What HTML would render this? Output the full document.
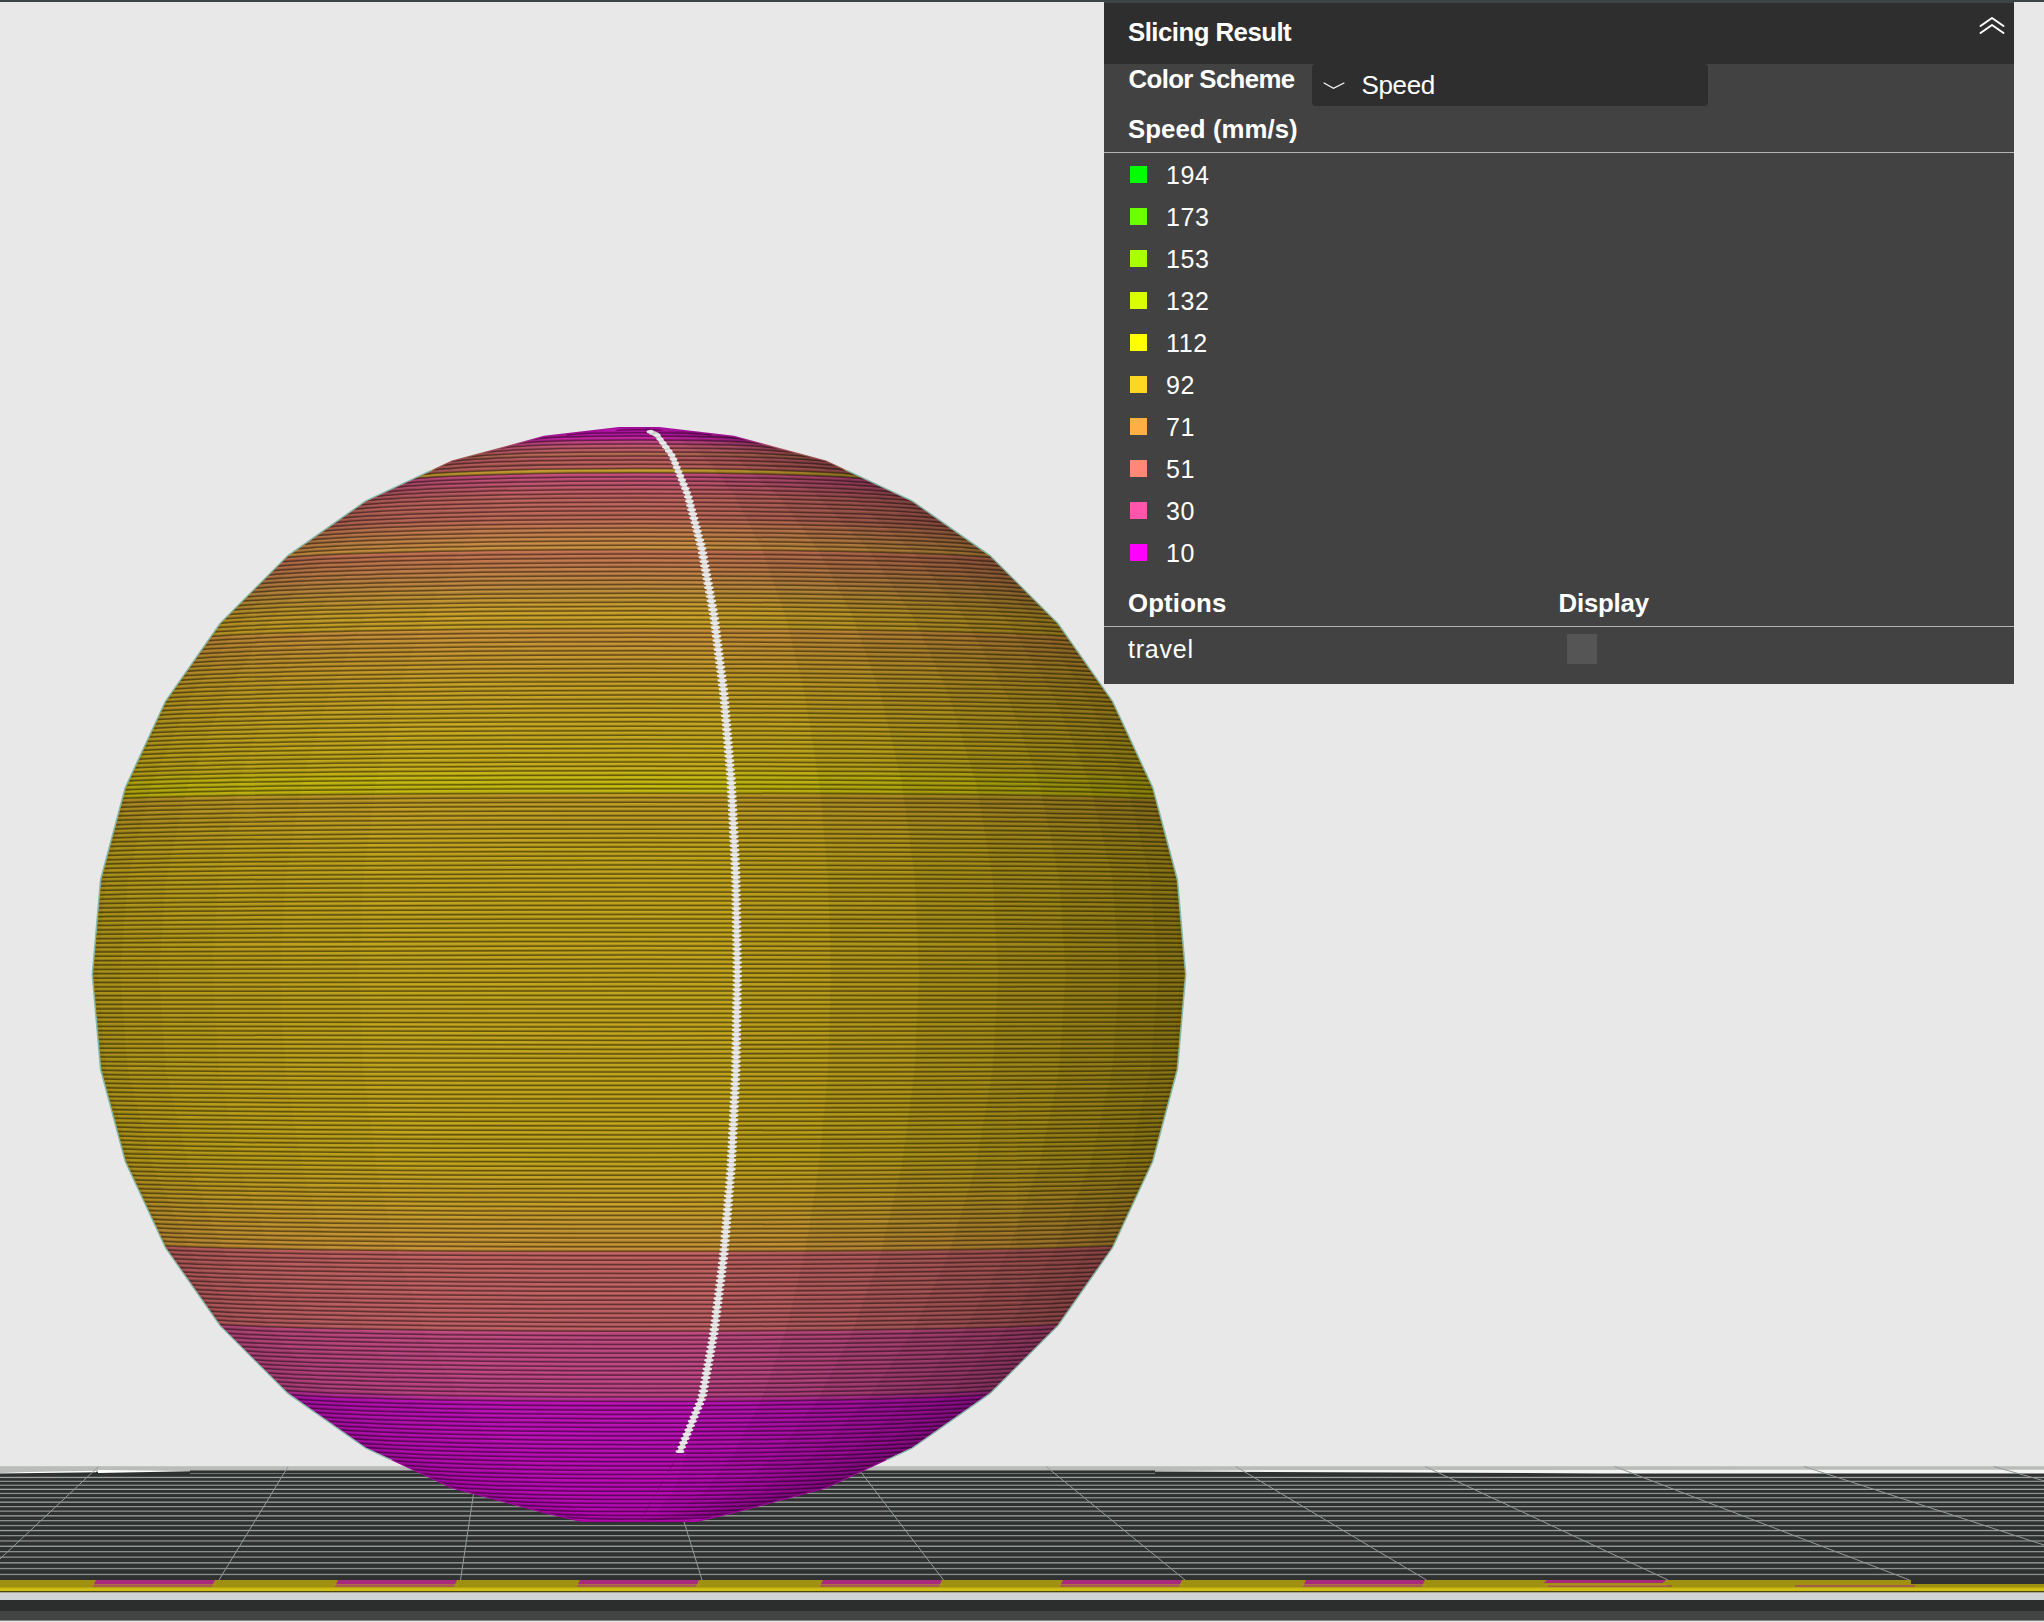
<!DOCTYPE html>
<html><head><meta charset="utf-8"><title>Slicing Result</title>
<style>
html,body{margin:0;padding:0}
body{width:2044px;height:1622px;overflow:hidden;background:#e8e8e8;position:relative;font-family:"Liberation Sans",sans-serif;color:#fff}
#topbar{position:absolute;left:0;top:0;width:2044px;height:2px;background:#3b4446}
#panel{position:absolute;left:1104px;top:0;width:910px;height:684px;background:#424242}
#hdr{position:absolute;left:0;top:0;width:910px;height:64px;background:#2e2e2e;border-top:3px solid #3b4446;box-sizing:border-box}
.b{font-weight:bold;position:absolute;white-space:nowrap}
.t{position:absolute;white-space:nowrap}
#dd{position:absolute;left:208px;top:64px;width:396px;height:42px;background:#2e2e2e;border-radius:4px}
.sep{position:absolute;left:0;width:910px;height:1px;background:#b4b4b4}
#legend{position:absolute;left:0;top:64px}
.row{position:absolute;left:26px;height:17px;white-space:nowrap}
.row i{position:absolute;left:0;top:0;width:17px;height:17px;display:block}
.row span{position:absolute;left:36px;top:-5.1px;font-size:25px;line-height:29px;letter-spacing:.6px}
#cb{position:absolute;left:463px;top:634px;width:30px;height:30px;background:#555}
</style></head><body>
<svg width="2044" height="1622" viewBox="0 0 2044 1622" style="position:absolute;left:0;top:0">
<defs><clipPath id="sc"><polygon points="1184.8,974.5 1176.5,879.7 1151.9,787.8 1111.7,701.6 1057.1,623.7 989.8,556.4 911.9,501.8 825.7,461.6 733.8,437.0 659.0,428.2 619.0,428.2 544.2,437.0 452.3,461.6 366.1,501.8 288.2,556.4 220.9,623.7 166.3,701.6 126.1,787.8 101.5,879.7 93.2,974.5 101.5,1069.3 126.1,1161.2 166.3,1247.4 220.9,1325.3 288.2,1392.6 366.1,1447.2 452.3,1487.4 544.2,1512.0 581.1,1520.8 696.9,1520.8 733.8,1512.0 825.7,1487.4 911.9,1447.2 989.8,1392.6 1057.1,1325.3 1111.7,1247.4 1151.9,1161.2 1176.5,1069.3"/></clipPath><linearGradient id="ug" gradientUnits="userSpaceOnUse" x1="0" y1="427.0" x2="0" y2="1522.0"><stop offset="0.0000" stop-color="#a00c98"/><stop offset="0.0100" stop-color="#a2188c"/><stop offset="0.0128" stop-color="#a43078"/><stop offset="0.0155" stop-color="#a4426a"/><stop offset="0.0192" stop-color="#a34d5b"/><stop offset="0.0228" stop-color="#a05053"/><stop offset="0.0237" stop-color="#9a5848"/><stop offset="0.0265" stop-color="#9a5848"/><stop offset="0.0274" stop-color="#9d4d53"/><stop offset="0.0329" stop-color="#9d504d"/><stop offset="0.0379" stop-color="#a05450"/><stop offset="0.0384" stop-color="#a48028"/><stop offset="0.0420" stop-color="#a48028"/><stop offset="0.0425" stop-color="#a4406a"/><stop offset="0.0493" stop-color="#a04560"/><stop offset="0.0639" stop-color="#a05350"/><stop offset="0.0840" stop-color="#9e584a"/><stop offset="0.0904" stop-color="#a36345"/><stop offset="0.1032" stop-color="#a5703c"/><stop offset="0.1132" stop-color="#ab7c34"/><stop offset="0.1146" stop-color="#a46045"/><stop offset="0.1260" stop-color="#a1663e"/><stop offset="0.1406" stop-color="#a07038"/><stop offset="0.1516" stop-color="#a17830"/><stop offset="0.1616" stop-color="#a48028"/><stop offset="0.1717" stop-color="#a98624"/><stop offset="0.1845" stop-color="#a68622"/><stop offset="0.1858" stop-color="#a87830"/><stop offset="0.2073" stop-color="#a47d28"/><stop offset="0.2347" stop-color="#a48420"/><stop offset="0.2685" stop-color="#a48a1c"/><stop offset="0.3132" stop-color="#a49016"/><stop offset="0.3187" stop-color="#a49810"/><stop offset="0.3333" stop-color="#a3990e"/><stop offset="0.3352" stop-color="#9e8020"/><stop offset="0.3863" stop-color="#a08819"/><stop offset="0.6694" stop-color="#a08818"/><stop offset="0.7059" stop-color="#a38320"/><stop offset="0.7543" stop-color="#a67a2e"/><stop offset="0.7553" stop-color="#a05250"/><stop offset="0.8256" stop-color="#a05053"/><stop offset="0.8265" stop-color="#a03e6b"/><stop offset="0.8868" stop-color="#9e3a70"/><stop offset="0.8904" stop-color="#9d1098"/><stop offset="1.0000" stop-color="#9a0896"/></linearGradient></defs>
<g id="plate">
<rect x="0" y="1466.2" width="2044" height="4.3" fill="#b9bcb9"/>
<rect x="0" y="1470.4" width="2044" height="110" fill="#2e3130"/>
<polygon points="0,1470 98,1470 98,1472 0,1472.6" fill="#b9bcb9"/>
<polygon points="0,1472.4 96,1470.8 96,1472.2 0,1473.6" fill="#fff"/>
<polygon points="98,1470 190,1470.4 190,1471.2 98,1473" fill="#fff"/>
<polygon points="1155,1470.6 1290,1470 2044,1469.8 2044,1473.6 1600,1473.4 1155,1471.4" fill="#f4f4f4"/>
<rect x="190" y="1473" width="965" height="1" fill="#6f7472"/>
<rect x="0" y="1476.8" width="2044" height="1.3" fill="#9ea3a0"/><rect x="0" y="1480.7" width="2044" height="1.3" fill="#8b908d"/><rect x="0" y="1484.6" width="2044" height="1.3" fill="#8b908d"/><rect x="0" y="1488.7" width="2044" height="1.3" fill="#9ea3a0"/><rect x="0" y="1492.8" width="2044" height="1.3" fill="#8b908d"/><rect x="0" y="1497.1" width="2044" height="1.3" fill="#8b908d"/><rect x="0" y="1501.5" width="2044" height="1.3" fill="#9ea3a0"/><rect x="0" y="1506.0" width="2044" height="1.3" fill="#8b908d"/><rect x="0" y="1510.5" width="2044" height="1.3" fill="#8b908d"/><rect x="0" y="1515.2" width="2044" height="1.3" fill="#9ea3a0"/><rect x="0" y="1520.0" width="2044" height="1.3" fill="#8b908d"/><rect x="0" y="1524.9" width="2044" height="1.3" fill="#8b908d"/><rect x="0" y="1529.9" width="2044" height="1.3" fill="#9ea3a0"/><rect x="0" y="1535.0" width="2044" height="1.3" fill="#8b908d"/><rect x="0" y="1540.3" width="2044" height="1.3" fill="#8b908d"/><rect x="0" y="1545.6" width="2044" height="1.3" fill="#9ea3a0"/><rect x="0" y="1551.0" width="2044" height="1.3" fill="#8b908d"/><rect x="0" y="1556.5" width="2044" height="1.3" fill="#8b908d"/><rect x="0" y="1562.2" width="2044" height="1.3" fill="#9ea3a0"/><rect x="0" y="1567.9" width="2044" height="1.3" fill="#8b908d"/><rect x="0" y="1573.8" width="2044" height="1.3" fill="#8b908d"/>
<g stroke="#959997" stroke-width="1"><line x1="-90.9" y1="1466.5" x2="-264.0" y2="1580"/><line x1="98.6" y1="1466.5" x2="-22.5" y2="1580"/><line x1="288.1" y1="1466.5" x2="219.0" y2="1580"/><line x1="477.6" y1="1466.5" x2="460.5" y2="1580"/><line x1="667.1" y1="1466.5" x2="702.0" y2="1580"/><line x1="856.6" y1="1466.5" x2="943.5" y2="1580"/><line x1="1046.1" y1="1466.5" x2="1185.0" y2="1580"/><line x1="1235.6" y1="1466.5" x2="1426.5" y2="1580"/><line x1="1425.1" y1="1466.5" x2="1668.0" y2="1580"/><line x1="1614.6" y1="1466.5" x2="1909.5" y2="1580"/><line x1="1804.1" y1="1466.5" x2="2151.0" y2="1580"/><line x1="1993.6" y1="1466.5" x2="2392.5" y2="1580"/><line x1="2183.1" y1="1466.5" x2="2634.0" y2="1580"/></g>
<rect x="0" y="1580" width="2044" height="8" fill="#a09010"/>
<polygon points="96,1580 215,1580 212,1586.5 93,1586.5" fill="#a82a7e"/><polygon points="338,1580 457,1580 454,1586.5 335,1586.5" fill="#a82a7e"/><polygon points="580,1580 699,1580 696,1586.5 577,1586.5" fill="#a82a7e"/><polygon points="823,1580 942,1580 939,1586.5 820,1586.5" fill="#a82a7e"/><polygon points="1063,1580 1182,1580 1179,1586.5 1060,1586.5" fill="#a82a7e"/><polygon points="1306,1580 1425,1580 1422,1586.5 1303,1586.5" fill="#a82a7e"/><polygon points="1547,1580 1666,1580 1663,1583.0 1544,1583.0" fill="#a82a7e"/><rect x="1548" y="1585.5" width="124" height="1" fill="#a82a7e"/><rect x="1911" y="1579.5" width="133" height="4.5" fill="#2e3130"/><rect x="1795" y="1585.5" width="120" height="1" fill="#a82a7e"/><rect x="92" y="1584.4" width="124" height="1" fill="#b09a20"/><rect x="334" y="1584.4" width="124" height="1" fill="#b09a20"/><rect x="576" y="1584.4" width="124" height="1" fill="#b09a20"/><rect x="819" y="1584.4" width="124" height="1" fill="#b09a20"/><rect x="1059" y="1584.4" width="124" height="1" fill="#b09a20"/><rect x="1302" y="1584.4" width="124" height="1" fill="#b09a20"/><rect x="1543" y="1584.4" width="124" height="1" fill="#b09a20"/>
<rect x="0" y="1587.6" width="2044" height="3.4" fill="#cfbf15"/>
<rect x="0" y="1591" width="2044" height="1.6" fill="#4a4512"/>
<rect x="0" y="1592.6" width="2044" height="7.6" fill="#d0d3d3"/>
<rect x="0" y="1600" width="2044" height="11" fill="#2c2e2d"/>
<rect x="0" y="1611" width="2044" height="9.6" fill="#424443"/>
</g>
<clipPath id="tc2"><rect x="0" y="0" width="2044" height="470"/><rect x="0" y="1460" width="2044" height="100"/></clipPath><clipPath id="tc"><rect x="0" y="470" width="2044" height="990"/></clipPath><polygon points="1186.0,974.5 1177.7,879.5 1153.0,787.4 1112.7,701.0 1058.0,622.9 990.6,555.5 912.5,500.8 826.1,460.5 734.0,435.8 659.0,427.0 619.0,427.0 544.0,435.8 451.9,460.5 365.5,500.8 287.4,555.5 220.0,622.9 165.3,701.0 125.0,787.4 100.3,879.5 92.0,974.5 100.3,1069.5 125.0,1161.6 165.3,1248.0 220.0,1326.1 287.4,1393.5 365.5,1448.2 451.9,1488.5 544.0,1513.2 581.0,1522.0 697.0,1522.0 734.0,1513.2 826.1,1488.5 912.5,1448.2 990.6,1393.5 1058.0,1326.1 1112.7,1248.0 1153.0,1161.6 1177.7,1069.5" fill="#7fb5a5" stroke="#7fb5a5" stroke-width="1" stroke-opacity=".8" clip-path="url(#tc)"/><polygon points="1186.0,974.5 1177.7,879.5 1153.0,787.4 1112.7,701.0 1058.0,622.9 990.6,555.5 912.5,500.8 826.1,460.5 734.0,435.8 659.0,427.0 619.0,427.0 544.0,435.8 451.9,460.5 365.5,500.8 287.4,555.5 220.0,622.9 165.3,701.0 125.0,787.4 100.3,879.5 92.0,974.5 100.3,1069.5 125.0,1161.6 165.3,1248.0 220.0,1326.1 287.4,1393.5 365.5,1448.2 451.9,1488.5 544.0,1513.2 581.0,1522.0 697.0,1522.0 734.0,1513.2 826.1,1488.5 912.5,1448.2 990.6,1393.5 1058.0,1326.1 1112.7,1248.0 1153.0,1161.6 1177.7,1069.5" fill="url(#ug)" clip-path="url(#tc2)"/>
<polygon points="1184.8,974.5 1176.5,879.7 1151.9,787.8 1111.7,701.6 1057.1,623.7 989.8,556.4 911.9,501.8 825.7,461.6 733.8,437.0 659.0,428.2 619.0,428.2 544.2,437.0 452.3,461.6 366.1,501.8 288.2,556.4 220.9,623.7 166.3,701.6 126.1,787.8 101.5,879.7 93.2,974.5 101.5,1069.3 126.1,1161.2 166.3,1247.4 220.9,1325.3 288.2,1392.6 366.1,1447.2 452.3,1487.4 544.2,1512.0 581.1,1520.8 696.9,1520.8 733.8,1512.0 825.7,1487.4 911.9,1447.2 989.8,1392.6 1057.1,1325.3 1111.7,1247.4 1151.9,1161.2 1176.5,1069.3" fill="url(#ug)"/>
<g clip-path="url(#sc)">
<g fill="none" stroke-width="4.98">
<path d="M616.0 429.2A21.2 0.85 0 0 1 662.0 429.2" stroke="#c311b7"/><path d="M566.6 433.6A73.5 2.94 0 0 1 711.4 433.6" stroke="#c415b3"/><path d="M533.0 437.9A109.1 4.33 0 0 1 745.0 437.9" stroke="#c519af"/><path d="M516.7 442.3A126.5 4.98 0 0 1 761.3 442.3" stroke="#c727a2"/><path d="M500.3 446.7A143.8 5.62 0 0 1 777.7 446.7" stroke="#c84887"/><path d="M484.0 451.1A161.1 6.25 0 0 1 794.0 451.1" stroke="#c75a74"/><path d="M467.6 455.5A178.5 6.86 0 0 1 810.4 455.5" stroke="#c46068"/><path d="M451.3 459.9A195.8 7.47 0 0 1 826.7 459.9" stroke="#bb6b58"/><path d="M440.9 464.2A206.8 7.82 0 0 1 837.1 464.2" stroke="#bf5f63"/><path d="M431.5 468.6A216.8 8.13 0 0 1 846.5 468.6" stroke="#bf625e"/><path d="M422.1 473.0A226.7 8.44 0 0 1 855.9 473.0" stroke="#c26561"/><path d="M412.7 477.4A236.7 8.73 0 0 1 865.3 477.4" stroke="#c89c31"/><path d="M403.3 481.8A246.6 9.03 0 0 1 874.7 481.8" stroke="#c6507d"/><path d="M393.9 486.1A256.6 9.31 0 0 1 884.1 486.1" stroke="#c45377"/><path d="M384.5 490.5A266.6 9.59 0 0 1 893.5 490.5" stroke="#c35771"/><path d="M375.1 494.9A276.5 9.86 0 0 1 902.9 494.9" stroke="#c35c6c"/><path d="M365.7 499.3A286.5 10.13 0 0 1 912.3 499.3" stroke="#c36067"/><path d="M358.4 503.6A294.2 10.31 0 0 1 919.6 503.6" stroke="#c36562"/><path d="M352.2 508.0A300.9 10.45 0 0 1 925.8 508.0" stroke="#c36660"/><path d="M345.9 512.4A307.5 10.59 0 0 1 932.1 512.4" stroke="#c2685f"/><path d="M339.6 516.8A314.1 10.72 0 0 1 938.4 516.8" stroke="#c2695d"/><path d="M333.4 521.2A320.8 10.85 0 0 1 944.6 521.2" stroke="#c16a5b"/><path d="M327.1 525.6A327.4 10.97 0 0 1 950.9 525.6" stroke="#c16b5a"/><path d="M320.9 529.9A334.0 11.09 0 0 1 957.1 529.9" stroke="#c47257"/><path d="M314.6 534.3A340.7 11.20 0 0 1 963.4 534.3" stroke="#c77a53"/><path d="M308.4 538.7A347.3 11.31 0 0 1 969.6 538.7" stroke="#c87f50"/><path d="M302.1 543.1A353.9 11.42 0 0 1 975.9 543.1" stroke="#c8834d"/><path d="M295.9 547.5A360.6 11.52 0 0 1 982.1 547.5" stroke="#c98849"/><path d="M289.6 551.8A367.2 11.62 0 0 1 988.4 551.8" stroke="#cc8e46"/><path d="M283.7 556.2A373.5 11.70 0 0 1 994.3 556.2" stroke="#cf9442"/><path d="M279.3 560.6A378.1 11.73 0 0 1 998.7 560.6" stroke="#c87554"/><path d="M274.9 565.0A382.8 11.76 0 0 1 1003.1 565.0" stroke="#c67851"/><path d="M270.5 569.4A387.4 11.78 0 0 1 1007.5 569.4" stroke="#c57b4e"/><path d="M266.1 573.7A392.1 11.80 0 0 1 1011.9 573.7" stroke="#c47d4c"/><path d="M261.8 578.1A396.7 11.82 0 0 1 1016.2 578.1" stroke="#c4814a"/><path d="M257.4 582.5A401.3 11.83 0 0 1 1020.6 582.5" stroke="#c38447"/><path d="M253.0 586.9A406.0 11.84 0 0 1 1025.0 586.9" stroke="#c38745"/><path d="M248.6 591.2A410.6 11.85 0 0 1 1029.4 591.2" stroke="#c38a42"/><path d="M244.2 595.6A415.3 11.86 0 0 1 1033.8 595.6" stroke="#c48e3f"/><path d="M239.9 600.0A419.9 11.86 0 0 1 1038.1 600.0" stroke="#c4923b"/><path d="M235.5 604.4A424.6 11.86 0 0 1 1042.5 604.4" stroke="#c59537"/><path d="M231.1 608.8A429.2 11.86 0 0 1 1046.9 608.8" stroke="#c79934"/><path d="M226.7 613.2A433.8 11.85 0 0 1 1051.3 613.2" stroke="#c99d30"/><path d="M222.3 617.5A438.5 11.84 0 0 1 1055.7 617.5" stroke="#cba02e"/><path d="M218.0 621.9A443.1 11.83 0 0 1 1060.0 621.9" stroke="#cda32c"/><path d="M214.6 626.3A446.7 11.79 0 0 1 1063.4 626.3" stroke="#cda42b"/><path d="M211.5 630.7A449.9 11.73 0 0 1 1066.5 630.7" stroke="#cca42a"/><path d="M208.5 635.1A453.2 11.68 0 0 1 1069.5 635.1" stroke="#cba429"/><path d="M205.4 639.4A456.4 11.62 0 0 1 1072.6 639.4" stroke="#cd933a"/><path d="M202.3 643.8A459.7 11.56 0 0 1 1075.7 643.8" stroke="#cc9438"/><path d="M199.3 648.2A462.9 11.50 0 0 1 1078.7 648.2" stroke="#cb9536"/><path d="M196.2 652.6A466.2 11.44 0 0 1 1081.8 652.6" stroke="#ca9635"/><path d="M193.1 657.0A469.4 11.37 0 0 1 1084.9 657.0" stroke="#c99733"/><path d="M190.1 661.3A472.7 11.30 0 0 1 1087.9 661.3" stroke="#c89831"/><path d="M187.0 665.7A475.9 11.23 0 0 1 1091.0 665.7" stroke="#c8992f"/><path d="M183.9 670.1A479.2 11.16 0 0 1 1094.1 670.1" stroke="#c89b2e"/><path d="M180.9 674.5A482.4 11.09 0 0 1 1097.1 674.5" stroke="#c89c2d"/><path d="M177.8 678.9A485.7 11.01 0 0 1 1100.2 678.9" stroke="#c89d2b"/><path d="M174.7 683.2A488.9 10.94 0 0 1 1103.3 683.2" stroke="#c89f2a"/><path d="M171.7 687.6A492.2 10.86 0 0 1 1106.3 687.6" stroke="#c8a028"/><path d="M168.6 692.0A495.5 10.78 0 0 1 1109.4 692.0" stroke="#c8a127"/><path d="M165.5 696.4A498.7 10.69 0 0 1 1112.5 696.4" stroke="#c8a226"/><path d="M162.5 700.8A502.0 10.61 0 0 1 1115.5 700.8" stroke="#c8a326"/><path d="M160.4 705.1A504.2 10.50 0 0 1 1117.6 705.1" stroke="#c8a325"/><path d="M158.3 709.5A506.3 10.39 0 0 1 1119.7 709.5" stroke="#c8a425"/><path d="M156.3 713.9A508.5 10.27 0 0 1 1121.7 713.9" stroke="#c8a524"/><path d="M154.2 718.3A510.7 10.16 0 0 1 1123.8 718.3" stroke="#c8a623"/><path d="M152.2 722.7A512.8 10.04 0 0 1 1125.8 722.7" stroke="#c8a723"/><path d="M150.1 727.0A515.0 9.93 0 0 1 1127.9 727.0" stroke="#c8a822"/><path d="M148.1 731.4A517.2 9.81 0 0 1 1129.9 731.4" stroke="#c8a822"/><path d="M146.1 735.8A519.3 9.69 0 0 1 1131.9 735.8" stroke="#c8a921"/><path d="M144.0 740.2A521.5 9.57 0 0 1 1134.0 740.2" stroke="#c8aa20"/><path d="M142.0 744.6A523.7 9.45 0 0 1 1136.0 744.6" stroke="#c8aa20"/><path d="M139.9 748.9A525.8 9.32 0 0 1 1138.1 748.9" stroke="#c8ab1f"/><path d="M137.9 753.3A528.0 9.20 0 0 1 1140.1 753.3" stroke="#c8ac1e"/><path d="M135.8 757.7A530.2 9.07 0 0 1 1142.2 757.7" stroke="#c8ad1e"/><path d="M133.8 762.1A532.3 8.94 0 0 1 1144.2 762.1" stroke="#c8ad1d"/><path d="M131.8 766.5A534.5 8.81 0 0 1 1146.2 766.5" stroke="#c8ae1d"/><path d="M129.7 770.8A536.7 8.68 0 0 1 1148.3 770.8" stroke="#c8af1c"/><path d="M127.7 775.2A538.8 8.55 0 0 1 1150.3 775.2" stroke="#c8af1b"/><path d="M125.6 779.6A541.0 8.42 0 0 1 1152.4 779.6" stroke="#c8b616"/><path d="M123.6 784.0A543.1 8.29 0 0 1 1154.4 784.0" stroke="#c8b913"/><path d="M121.7 788.4A545.1 8.15 0 0 1 1156.3 788.4" stroke="#c7ba13"/><path d="M120.6 792.7A546.4 8.00 0 0 1 1157.4 792.7" stroke="#c7ba12"/><path d="M119.4 797.1A547.6 7.85 0 0 1 1158.6 797.1" stroke="#c7ba12"/><path d="M118.2 801.5A548.9 7.69 0 0 1 1159.8 801.5" stroke="#c19c27"/><path d="M117.0 805.9A550.1 7.54 0 0 1 1161.0 805.9" stroke="#c19d26"/><path d="M115.9 810.2A551.3 7.39 0 0 1 1162.1 810.2" stroke="#c19e25"/><path d="M114.7 814.6A552.6 7.23 0 0 1 1163.3 814.6" stroke="#c29f25"/><path d="M113.5 819.0A553.8 7.08 0 0 1 1164.5 819.0" stroke="#c2a024"/><path d="M112.3 823.4A555.1 6.92 0 0 1 1165.7 823.4" stroke="#c2a023"/><path d="M111.2 827.8A556.3 6.77 0 0 1 1166.8 827.8" stroke="#c2a122"/><path d="M110.0 832.2A557.6 6.61 0 0 1 1168.0 832.2" stroke="#c2a222"/><path d="M108.8 836.5A558.8 6.45 0 0 1 1169.2 836.5" stroke="#c2a321"/><path d="M107.7 840.9A560.0 6.29 0 0 1 1170.3 840.9" stroke="#c3a320"/><path d="M106.5 845.3A561.3 6.13 0 0 1 1171.5 845.3" stroke="#c3a420"/><path d="M105.3 849.7A562.5 5.97 0 0 1 1172.7 849.7" stroke="#c3a51f"/><path d="M104.1 854.1A563.8 5.81 0 0 1 1173.9 854.1" stroke="#c3a61e"/><path d="M103.0 858.4A565.0 5.65 0 0 1 1175.0 858.4" stroke="#c3a61e"/><path d="M101.8 862.8A566.3 5.49 0 0 1 1176.2 862.8" stroke="#c3a61e"/><path d="M100.6 867.2A567.5 5.32 0 0 1 1177.4 867.2" stroke="#c3a61e"/><path d="M99.4 871.6A568.8 5.16 0 0 1 1178.6 871.6" stroke="#c3a61e"/><path d="M98.3 876.0A570.0 4.99 0 0 1 1179.7 876.0" stroke="#c3a61e"/><path d="M97.2 880.3A571.1 4.83 0 0 1 1180.8 880.3" stroke="#c3a61e"/><path d="M96.9 884.7A571.5 4.65 0 0 1 1181.1 884.7" stroke="#c3a61e"/><path d="M96.5 889.1A571.9 4.48 0 0 1 1181.5 889.1" stroke="#c3a61e"/><path d="M96.1 893.5A572.3 4.31 0 0 1 1181.9 893.5" stroke="#c3a61e"/><path d="M95.7 897.9A572.7 4.13 0 0 1 1182.3 897.9" stroke="#c3a61e"/><path d="M95.3 902.2A573.1 3.96 0 0 1 1182.7 902.2" stroke="#c3a61e"/><path d="M94.9 906.6A573.5 3.78 0 0 1 1183.1 906.6" stroke="#c3a61e"/><path d="M94.6 911.0A573.9 3.61 0 0 1 1183.4 911.0" stroke="#c3a61e"/><path d="M94.2 915.4A574.3 3.43 0 0 1 1183.8 915.4" stroke="#c3a61e"/><path d="M93.8 919.8A574.7 3.26 0 0 1 1184.2 919.8" stroke="#c3a61e"/><path d="M93.4 924.1A575.1 3.08 0 0 1 1184.6 924.1" stroke="#c3a61e"/><path d="M93.0 928.5A575.6 2.91 0 0 1 1185.0 928.5" stroke="#c3a61e"/><path d="M92.6 932.9A576.0 2.73 0 0 1 1185.4 932.9" stroke="#c3a61e"/><path d="M92.3 937.3A576.4 2.55 0 0 1 1185.7 937.3" stroke="#c3a61e"/><path d="M91.9 941.7A576.8 2.38 0 0 1 1186.1 941.7" stroke="#c3a61e"/><path d="M91.5 946.0A577.2 2.20 0 0 1 1186.5 946.0" stroke="#c3a61e"/><path d="M91.1 950.4A577.6 2.02 0 0 1 1186.9 950.4" stroke="#c3a61e"/><path d="M90.7 954.8A578.0 1.85 0 0 1 1187.3 954.8" stroke="#c3a61e"/><path d="M90.3 959.2A578.4 1.67 0 0 1 1187.7 959.2" stroke="#c3a61e"/><path d="M90.0 963.6A578.8 1.49 0 0 1 1188.0 963.6" stroke="#c3a61e"/><path d="M89.6 967.9A579.2 1.31 0 0 1 1188.4 967.9" stroke="#c3a61e"/><path d="M89.2 972.3A579.6 1.13 0 0 1 1188.8 972.3" stroke="#c3a61e"/><path d="M89.2 976.7A579.6 0.95 0 0 1 1188.8 976.7" stroke="#c3a61e"/><path d="M89.6 981.1A579.2 0.77 0 0 1 1188.4 981.1" stroke="#c3a61e"/><path d="M90.0 985.5A578.8 0.59 0 0 1 1188.0 985.5" stroke="#c3a61e"/><path d="M90.3 989.8A578.4 0.42 0 0 1 1187.7 989.8" stroke="#c3a61e"/><path d="M90.7 994.2A578.0 0.24 0 0 1 1187.3 994.2" stroke="#c3a61e"/><path d="M91.1 998.6A577.6 0.06 0 0 1 1186.9 998.6" stroke="#c3a61e"/><path d="M91.5 1003.0A577.2 0.12 0 0 0 1186.5 1003.0" stroke="#c3a61e"/><path d="M91.9 1007.4A576.8 0.30 0 0 0 1186.1 1007.4" stroke="#c3a61e"/><path d="M92.3 1011.7A576.4 0.48 0 0 0 1185.7 1011.7" stroke="#c3a61e"/><path d="M92.6 1016.1A576.0 0.66 0 0 0 1185.4 1016.1" stroke="#c3a61e"/><path d="M93.0 1020.5A575.6 0.83 0 0 0 1185.0 1020.5" stroke="#c3a61e"/><path d="M93.4 1024.9A575.1 1.01 0 0 0 1184.6 1024.9" stroke="#c3a61e"/><path d="M93.8 1029.2A574.7 1.19 0 0 0 1184.2 1029.2" stroke="#c3a61e"/><path d="M94.2 1033.6A574.3 1.36 0 0 0 1183.8 1033.6" stroke="#c3a61e"/><path d="M94.6 1038.0A573.9 1.54 0 0 0 1183.4 1038.0" stroke="#c3a61e"/><path d="M94.9 1042.4A573.5 1.72 0 0 0 1183.1 1042.4" stroke="#c3a61e"/><path d="M95.3 1046.8A573.1 1.89 0 0 0 1182.7 1046.8" stroke="#c3a61e"/><path d="M95.7 1051.2A572.7 2.07 0 0 0 1182.3 1051.2" stroke="#c3a61e"/><path d="M96.1 1055.5A572.3 2.24 0 0 0 1181.9 1055.5" stroke="#c3a61e"/><path d="M96.5 1059.9A571.9 2.42 0 0 0 1181.5 1059.9" stroke="#c3a61e"/><path d="M96.9 1064.3A571.5 2.59 0 0 0 1181.1 1064.3" stroke="#c3a61e"/><path d="M97.2 1068.7A571.1 2.77 0 0 0 1180.8 1068.7" stroke="#c3a61e"/><path d="M98.3 1073.1A570.0 2.94 0 0 0 1179.7 1073.1" stroke="#c3a61e"/><path d="M99.4 1077.4A568.8 3.11 0 0 0 1178.6 1077.4" stroke="#c3a61e"/><path d="M100.6 1081.8A567.5 3.28 0 0 0 1177.4 1081.8" stroke="#c3a61d"/><path d="M101.8 1086.2A566.3 3.45 0 0 0 1176.2 1086.2" stroke="#c3a61d"/><path d="M103.0 1090.6A565.0 3.61 0 0 0 1175.0 1090.6" stroke="#c3a61d"/><path d="M104.1 1095.0A563.8 3.78 0 0 0 1173.9 1095.0" stroke="#c3a61d"/><path d="M105.3 1099.3A562.5 3.95 0 0 0 1172.7 1099.3" stroke="#c3a61d"/><path d="M106.5 1103.7A561.3 4.11 0 0 0 1171.5 1103.7" stroke="#c3a61d"/><path d="M107.7 1108.1A560.0 4.27 0 0 0 1170.3 1108.1" stroke="#c3a61d"/><path d="M108.8 1112.5A558.8 4.44 0 0 0 1169.2 1112.5" stroke="#c3a61d"/><path d="M110.0 1116.8A557.6 4.60 0 0 0 1168.0 1116.8" stroke="#c3a61d"/><path d="M111.2 1121.2A556.3 4.76 0 0 0 1166.8 1121.2" stroke="#c3a61d"/><path d="M112.3 1125.6A555.1 4.92 0 0 0 1165.7 1125.6" stroke="#c3a61d"/><path d="M113.5 1130.0A553.8 5.08 0 0 0 1164.5 1130.0" stroke="#c3a61d"/><path d="M114.7 1134.4A552.6 5.24 0 0 0 1163.3 1134.4" stroke="#c3a61d"/><path d="M115.9 1138.8A551.3 5.40 0 0 0 1162.1 1138.8" stroke="#c3a61d"/><path d="M117.0 1143.1A550.1 5.56 0 0 0 1161.0 1143.1" stroke="#c3a61d"/><path d="M118.2 1147.5A548.9 5.72 0 0 0 1159.8 1147.5" stroke="#c3a61d"/><path d="M119.4 1151.9A547.6 5.87 0 0 0 1158.6 1151.9" stroke="#c3a61d"/><path d="M120.6 1156.3A546.4 6.03 0 0 0 1157.4 1156.3" stroke="#c3a61d"/><path d="M121.7 1160.7A545.1 6.18 0 0 0 1156.3 1160.7" stroke="#c3a51e"/><path d="M123.6 1165.0A543.1 6.33 0 0 0 1154.4 1165.0" stroke="#c4a420"/><path d="M125.6 1169.4A541.0 6.47 0 0 0 1152.4 1169.4" stroke="#c4a421"/><path d="M127.7 1173.8A538.8 6.61 0 0 0 1150.3 1173.8" stroke="#c5a322"/><path d="M129.7 1178.2A536.7 6.75 0 0 0 1148.3 1178.2" stroke="#c5a223"/><path d="M131.8 1182.6A534.5 6.89 0 0 0 1146.2 1182.6" stroke="#c6a224"/><path d="M133.8 1186.9A532.3 7.03 0 0 0 1144.2 1186.9" stroke="#c6a125"/><path d="M135.8 1191.3A530.2 7.16 0 0 0 1142.2 1191.3" stroke="#c7a026"/><path d="M137.9 1195.7A528.0 7.30 0 0 0 1140.1 1195.7" stroke="#c7a027"/><path d="M139.9 1200.1A525.8 7.43 0 0 0 1138.1 1200.1" stroke="#c79f29"/><path d="M142.0 1204.5A523.7 7.56 0 0 0 1136.0 1204.5" stroke="#c89e2a"/><path d="M144.0 1208.8A521.5 7.69 0 0 0 1134.0 1208.8" stroke="#c89d2c"/><path d="M146.1 1213.2A519.3 7.82 0 0 0 1131.9 1213.2" stroke="#c89c2d"/><path d="M148.1 1217.6A517.2 7.95 0 0 0 1129.9 1217.6" stroke="#c99b2f"/><path d="M150.1 1222.0A515.0 8.07 0 0 0 1127.9 1222.0" stroke="#c99a30"/><path d="M152.2 1226.3A512.8 8.20 0 0 0 1125.8 1226.3" stroke="#c99932"/><path d="M154.2 1230.7A510.7 8.32 0 0 0 1123.8 1230.7" stroke="#ca9833"/><path d="M156.3 1235.1A508.5 8.44 0 0 0 1121.7 1235.1" stroke="#ca9734"/><path d="M158.3 1239.5A506.3 8.56 0 0 0 1119.7 1239.5" stroke="#ca9636"/><path d="M160.4 1243.9A504.2 8.68 0 0 0 1117.6 1243.9" stroke="#cb9537"/><path d="M162.5 1248.2A502.0 8.80 0 0 0 1115.5 1248.2" stroke="#c36362"/><path d="M165.5 1252.6A498.7 8.90 0 0 0 1112.5 1252.6" stroke="#c36362"/><path d="M168.6 1257.0A495.5 8.99 0 0 0 1109.4 1257.0" stroke="#c36362"/><path d="M171.7 1261.4A492.2 9.08 0 0 0 1106.3 1261.4" stroke="#c36362"/><path d="M174.7 1265.8A488.9 9.18 0 0 0 1103.3 1265.8" stroke="#c36362"/><path d="M177.8 1270.2A485.7 9.27 0 0 0 1100.2 1270.2" stroke="#c36363"/><path d="M180.9 1274.5A482.4 9.35 0 0 0 1097.1 1274.5" stroke="#c36363"/><path d="M183.9 1278.9A479.2 9.44 0 0 0 1094.1 1278.9" stroke="#c36363"/><path d="M187.0 1283.3A475.9 9.52 0 0 0 1091.0 1283.3" stroke="#c36363"/><path d="M190.1 1287.7A472.7 9.60 0 0 0 1087.9 1287.7" stroke="#c36264"/><path d="M193.1 1292.1A469.4 9.68 0 0 0 1084.9 1292.1" stroke="#c36264"/><path d="M196.2 1296.4A466.2 9.76 0 0 0 1081.8 1296.4" stroke="#c36264"/><path d="M199.3 1300.8A462.9 9.83 0 0 0 1078.7 1300.8" stroke="#c36264"/><path d="M202.3 1305.2A459.7 9.91 0 0 0 1075.7 1305.2" stroke="#c36264"/><path d="M205.4 1309.6A456.4 9.98 0 0 0 1072.6 1309.6" stroke="#c36265"/><path d="M208.5 1314.0A453.2 10.05 0 0 0 1069.5 1314.0" stroke="#c36265"/><path d="M211.5 1318.3A449.9 10.11 0 0 0 1066.5 1318.3" stroke="#c36265"/><path d="M214.6 1322.7A446.7 10.18 0 0 0 1063.4 1322.7" stroke="#c36265"/><path d="M218.0 1327.1A443.1 10.23 0 0 0 1060.0 1327.1" stroke="#c34c83"/><path d="M222.3 1331.5A438.5 10.26 0 0 0 1055.7 1331.5" stroke="#c34b83"/><path d="M226.7 1335.8A433.8 10.29 0 0 0 1051.3 1335.8" stroke="#c34b84"/><path d="M231.1 1340.2A429.2 10.31 0 0 0 1046.9 1340.2" stroke="#c34b84"/><path d="M235.5 1344.6A424.6 10.33 0 0 0 1042.5 1344.6" stroke="#c24a84"/><path d="M239.9 1349.0A419.9 10.35 0 0 0 1038.1 1349.0" stroke="#c24a85"/><path d="M244.2 1353.4A415.3 10.36 0 0 0 1033.8 1353.4" stroke="#c24a85"/><path d="M248.6 1357.8A410.6 10.37 0 0 0 1029.4 1357.8" stroke="#c24986"/><path d="M253.0 1362.1A406.0 10.38 0 0 0 1025.0 1362.1" stroke="#c24986"/><path d="M257.4 1366.5A401.3 10.39 0 0 0 1020.6 1366.5" stroke="#c24886"/><path d="M261.8 1370.9A396.7 10.39 0 0 0 1016.2 1370.9" stroke="#c24887"/><path d="M266.1 1375.3A392.1 10.39 0 0 0 1011.9 1375.3" stroke="#c24887"/><path d="M270.5 1379.7A387.4 10.39 0 0 0 1007.5 1379.7" stroke="#c14787"/><path d="M274.9 1384.0A382.8 10.38 0 0 0 1003.1 1384.0" stroke="#c14788"/><path d="M279.3 1388.4A378.1 10.37 0 0 0 998.7 1388.4" stroke="#c14688"/><path d="M283.7 1392.8A373.5 10.36 0 0 0 994.3 1392.8" stroke="#c0319d"/><path d="M289.6 1397.2A367.2 10.30 0 0 0 988.4 1397.2" stroke="#bf13b9"/><path d="M295.9 1401.6A360.6 10.22 0 0 0 982.1 1401.6" stroke="#bf13b9"/><path d="M302.1 1405.9A353.9 10.14 0 0 0 975.9 1405.9" stroke="#bf13b9"/><path d="M308.4 1410.3A347.3 10.06 0 0 0 969.6 1410.3" stroke="#bf12b9"/><path d="M314.6 1414.7A340.7 9.98 0 0 0 963.4 1414.7" stroke="#be12b9"/><path d="M320.9 1419.1A334.0 9.88 0 0 0 957.1 1419.1" stroke="#be12b9"/><path d="M327.1 1423.5A327.4 9.79 0 0 0 950.9 1423.5" stroke="#be11b9"/><path d="M333.4 1427.8A320.8 9.69 0 0 0 944.6 1427.8" stroke="#be11b9"/><path d="M339.6 1432.2A314.1 9.59 0 0 0 938.4 1432.2" stroke="#be11b9"/><path d="M345.9 1436.6A307.5 9.48 0 0 0 932.1 1436.6" stroke="#be10b9"/><path d="M352.2 1441.0A300.9 9.37 0 0 0 925.8 1441.0" stroke="#be10b9"/><path d="M358.4 1445.3A294.2 9.25 0 0 0 919.6 1445.3" stroke="#bd0fb8"/><path d="M365.7 1449.7A286.5 9.10 0 0 0 912.3 1449.7" stroke="#bd0fb8"/><path d="M375.1 1454.1A276.5 8.87 0 0 0 902.9 1454.1" stroke="#bd0fb8"/><path d="M384.5 1458.5A266.6 8.63 0 0 0 893.5 1458.5" stroke="#bd0eb8"/><path d="M393.9 1462.9A256.6 8.39 0 0 0 884.1 1462.9" stroke="#bd0eb8"/><path d="M403.3 1467.2A246.6 8.14 0 0 0 874.7 1467.2" stroke="#bd0eb8"/><path d="M412.7 1471.6A236.7 7.88 0 0 0 865.3 1471.6" stroke="#bd0db8"/><path d="M422.1 1476.0A226.7 7.62 0 0 0 855.9 1476.0" stroke="#bd0db8"/><path d="M431.5 1480.4A216.8 7.35 0 0 0 846.5 1480.4" stroke="#bc0db8"/><path d="M440.9 1484.8A206.8 7.08 0 0 0 837.1 1484.8" stroke="#bc0cb8"/><path d="M451.3 1489.2A195.8 6.76 0 0 0 826.7 1489.2" stroke="#bc0cb8"/><path d="M467.6 1493.5A178.5 6.22 0 0 0 810.4 1493.5" stroke="#bc0cb8"/><path d="M484.0 1497.9A161.1 5.67 0 0 0 794.0 1497.9" stroke="#bc0bb8"/><path d="M500.3 1502.3A143.8 5.10 0 0 0 777.7 1502.3" stroke="#bc0bb8"/><path d="M516.7 1506.7A126.5 4.53 0 0 0 761.3 1506.7" stroke="#bc0bb7"/><path d="M533.0 1511.0A109.1 3.94 0 0 0 745.0 1511.0" stroke="#bb0ab7"/><path d="M566.6 1515.4A73.5 2.68 0 0 0 711.4 1515.4" stroke="#bb0ab7"/><path d="M573.0 1519.8A66.8 2.45 0 0 0 705.0 1519.8" stroke="#bb0ab7"/>
</g>
<defs><g id="dk"><path d="M616.0 429.2A21.2 0.85 0 0 1 662.0 429.2"/><path d="M566.6 433.6A73.5 2.94 0 0 1 711.4 433.6"/><path d="M533.0 437.9A109.1 4.33 0 0 1 745.0 437.9"/><path d="M516.7 442.3A126.5 4.98 0 0 1 761.3 442.3"/><path d="M500.3 446.7A143.8 5.62 0 0 1 777.7 446.7"/><path d="M484.0 451.1A161.1 6.25 0 0 1 794.0 451.1"/><path d="M467.6 455.5A178.5 6.86 0 0 1 810.4 455.5"/><path d="M451.3 459.9A195.8 7.47 0 0 1 826.7 459.9"/><path d="M440.9 464.2A206.8 7.82 0 0 1 837.1 464.2"/><path d="M431.5 468.6A216.8 8.13 0 0 1 846.5 468.6"/><path d="M422.1 473.0A226.7 8.44 0 0 1 855.9 473.0"/><path d="M412.7 477.4A236.7 8.73 0 0 1 865.3 477.4"/><path d="M403.3 481.8A246.6 9.03 0 0 1 874.7 481.8"/><path d="M393.9 486.1A256.6 9.31 0 0 1 884.1 486.1"/><path d="M384.5 490.5A266.6 9.59 0 0 1 893.5 490.5"/><path d="M375.1 494.9A276.5 9.86 0 0 1 902.9 494.9"/><path d="M365.7 499.3A286.5 10.13 0 0 1 912.3 499.3"/><path d="M358.4 503.6A294.2 10.31 0 0 1 919.6 503.6"/><path d="M352.2 508.0A300.9 10.45 0 0 1 925.8 508.0"/><path d="M345.9 512.4A307.5 10.59 0 0 1 932.1 512.4"/><path d="M339.6 516.8A314.1 10.72 0 0 1 938.4 516.8"/><path d="M333.4 521.2A320.8 10.85 0 0 1 944.6 521.2"/><path d="M327.1 525.6A327.4 10.97 0 0 1 950.9 525.6"/><path d="M320.9 529.9A334.0 11.09 0 0 1 957.1 529.9"/><path d="M314.6 534.3A340.7 11.20 0 0 1 963.4 534.3"/><path d="M308.4 538.7A347.3 11.31 0 0 1 969.6 538.7"/><path d="M302.1 543.1A353.9 11.42 0 0 1 975.9 543.1"/><path d="M295.9 547.5A360.6 11.52 0 0 1 982.1 547.5"/><path d="M289.6 551.8A367.2 11.62 0 0 1 988.4 551.8"/><path d="M283.7 556.2A373.5 11.70 0 0 1 994.3 556.2"/><path d="M279.3 560.6A378.1 11.73 0 0 1 998.7 560.6"/><path d="M274.9 565.0A382.8 11.76 0 0 1 1003.1 565.0"/><path d="M270.5 569.4A387.4 11.78 0 0 1 1007.5 569.4"/><path d="M266.1 573.7A392.1 11.80 0 0 1 1011.9 573.7"/><path d="M261.8 578.1A396.7 11.82 0 0 1 1016.2 578.1"/><path d="M257.4 582.5A401.3 11.83 0 0 1 1020.6 582.5"/><path d="M253.0 586.9A406.0 11.84 0 0 1 1025.0 586.9"/><path d="M248.6 591.2A410.6 11.85 0 0 1 1029.4 591.2"/><path d="M244.2 595.6A415.3 11.86 0 0 1 1033.8 595.6"/><path d="M239.9 600.0A419.9 11.86 0 0 1 1038.1 600.0"/><path d="M235.5 604.4A424.6 11.86 0 0 1 1042.5 604.4"/><path d="M231.1 608.8A429.2 11.86 0 0 1 1046.9 608.8"/><path d="M226.7 613.2A433.8 11.85 0 0 1 1051.3 613.2"/><path d="M222.3 617.5A438.5 11.84 0 0 1 1055.7 617.5"/><path d="M218.0 621.9A443.1 11.83 0 0 1 1060.0 621.9"/><path d="M214.6 626.3A446.7 11.79 0 0 1 1063.4 626.3"/><path d="M211.5 630.7A449.9 11.73 0 0 1 1066.5 630.7"/><path d="M208.5 635.1A453.2 11.68 0 0 1 1069.5 635.1"/><path d="M205.4 639.4A456.4 11.62 0 0 1 1072.6 639.4"/><path d="M202.3 643.8A459.7 11.56 0 0 1 1075.7 643.8"/><path d="M199.3 648.2A462.9 11.50 0 0 1 1078.7 648.2"/><path d="M196.2 652.6A466.2 11.44 0 0 1 1081.8 652.6"/><path d="M193.1 657.0A469.4 11.37 0 0 1 1084.9 657.0"/><path d="M190.1 661.3A472.7 11.30 0 0 1 1087.9 661.3"/><path d="M187.0 665.7A475.9 11.23 0 0 1 1091.0 665.7"/><path d="M183.9 670.1A479.2 11.16 0 0 1 1094.1 670.1"/><path d="M180.9 674.5A482.4 11.09 0 0 1 1097.1 674.5"/><path d="M177.8 678.9A485.7 11.01 0 0 1 1100.2 678.9"/><path d="M174.7 683.2A488.9 10.94 0 0 1 1103.3 683.2"/><path d="M171.7 687.6A492.2 10.86 0 0 1 1106.3 687.6"/><path d="M168.6 692.0A495.5 10.78 0 0 1 1109.4 692.0"/><path d="M165.5 696.4A498.7 10.69 0 0 1 1112.5 696.4"/><path d="M162.5 700.8A502.0 10.61 0 0 1 1115.5 700.8"/><path d="M160.4 705.1A504.2 10.50 0 0 1 1117.6 705.1"/><path d="M158.3 709.5A506.3 10.39 0 0 1 1119.7 709.5"/><path d="M156.3 713.9A508.5 10.27 0 0 1 1121.7 713.9"/><path d="M154.2 718.3A510.7 10.16 0 0 1 1123.8 718.3"/><path d="M152.2 722.7A512.8 10.04 0 0 1 1125.8 722.7"/><path d="M150.1 727.0A515.0 9.93 0 0 1 1127.9 727.0"/><path d="M148.1 731.4A517.2 9.81 0 0 1 1129.9 731.4"/><path d="M146.1 735.8A519.3 9.69 0 0 1 1131.9 735.8"/><path d="M144.0 740.2A521.5 9.57 0 0 1 1134.0 740.2"/><path d="M142.0 744.6A523.7 9.45 0 0 1 1136.0 744.6"/><path d="M139.9 748.9A525.8 9.32 0 0 1 1138.1 748.9"/><path d="M137.9 753.3A528.0 9.20 0 0 1 1140.1 753.3"/><path d="M135.8 757.7A530.2 9.07 0 0 1 1142.2 757.7"/><path d="M133.8 762.1A532.3 8.94 0 0 1 1144.2 762.1"/><path d="M131.8 766.5A534.5 8.81 0 0 1 1146.2 766.5"/><path d="M129.7 770.8A536.7 8.68 0 0 1 1148.3 770.8"/><path d="M127.7 775.2A538.8 8.55 0 0 1 1150.3 775.2"/><path d="M125.6 779.6A541.0 8.42 0 0 1 1152.4 779.6"/><path d="M123.6 784.0A543.1 8.29 0 0 1 1154.4 784.0"/><path d="M121.7 788.4A545.1 8.15 0 0 1 1156.3 788.4"/><path d="M120.6 792.7A546.4 8.00 0 0 1 1157.4 792.7"/><path d="M119.4 797.1A547.6 7.85 0 0 1 1158.6 797.1"/><path d="M118.2 801.5A548.9 7.69 0 0 1 1159.8 801.5"/><path d="M117.0 805.9A550.1 7.54 0 0 1 1161.0 805.9"/><path d="M115.9 810.2A551.3 7.39 0 0 1 1162.1 810.2"/><path d="M114.7 814.6A552.6 7.23 0 0 1 1163.3 814.6"/><path d="M113.5 819.0A553.8 7.08 0 0 1 1164.5 819.0"/><path d="M112.3 823.4A555.1 6.92 0 0 1 1165.7 823.4"/><path d="M111.2 827.8A556.3 6.77 0 0 1 1166.8 827.8"/><path d="M110.0 832.2A557.6 6.61 0 0 1 1168.0 832.2"/><path d="M108.8 836.5A558.8 6.45 0 0 1 1169.2 836.5"/><path d="M107.7 840.9A560.0 6.29 0 0 1 1170.3 840.9"/><path d="M106.5 845.3A561.3 6.13 0 0 1 1171.5 845.3"/><path d="M105.3 849.7A562.5 5.97 0 0 1 1172.7 849.7"/><path d="M104.1 854.1A563.8 5.81 0 0 1 1173.9 854.1"/><path d="M103.0 858.4A565.0 5.65 0 0 1 1175.0 858.4"/><path d="M101.8 862.8A566.3 5.49 0 0 1 1176.2 862.8"/><path d="M100.6 867.2A567.5 5.32 0 0 1 1177.4 867.2"/><path d="M99.4 871.6A568.8 5.16 0 0 1 1178.6 871.6"/><path d="M98.3 876.0A570.0 4.99 0 0 1 1179.7 876.0"/><path d="M97.2 880.3A571.1 4.83 0 0 1 1180.8 880.3"/><path d="M96.9 884.7A571.5 4.65 0 0 1 1181.1 884.7"/><path d="M96.5 889.1A571.9 4.48 0 0 1 1181.5 889.1"/><path d="M96.1 893.5A572.3 4.31 0 0 1 1181.9 893.5"/><path d="M95.7 897.9A572.7 4.13 0 0 1 1182.3 897.9"/><path d="M95.3 902.2A573.1 3.96 0 0 1 1182.7 902.2"/><path d="M94.9 906.6A573.5 3.78 0 0 1 1183.1 906.6"/><path d="M94.6 911.0A573.9 3.61 0 0 1 1183.4 911.0"/><path d="M94.2 915.4A574.3 3.43 0 0 1 1183.8 915.4"/><path d="M93.8 919.8A574.7 3.26 0 0 1 1184.2 919.8"/><path d="M93.4 924.1A575.1 3.08 0 0 1 1184.6 924.1"/><path d="M93.0 928.5A575.6 2.91 0 0 1 1185.0 928.5"/><path d="M92.6 932.9A576.0 2.73 0 0 1 1185.4 932.9"/><path d="M92.3 937.3A576.4 2.55 0 0 1 1185.7 937.3"/><path d="M91.9 941.7A576.8 2.38 0 0 1 1186.1 941.7"/><path d="M91.5 946.0A577.2 2.20 0 0 1 1186.5 946.0"/><path d="M91.1 950.4A577.6 2.02 0 0 1 1186.9 950.4"/><path d="M90.7 954.8A578.0 1.85 0 0 1 1187.3 954.8"/><path d="M90.3 959.2A578.4 1.67 0 0 1 1187.7 959.2"/><path d="M90.0 963.6A578.8 1.49 0 0 1 1188.0 963.6"/><path d="M89.6 967.9A579.2 1.31 0 0 1 1188.4 967.9"/><path d="M89.2 972.3A579.6 1.13 0 0 1 1188.8 972.3"/><path d="M89.2 976.7A579.6 0.95 0 0 1 1188.8 976.7"/><path d="M89.6 981.1A579.2 0.77 0 0 1 1188.4 981.1"/><path d="M90.0 985.5A578.8 0.59 0 0 1 1188.0 985.5"/><path d="M90.3 989.8A578.4 0.42 0 0 1 1187.7 989.8"/><path d="M90.7 994.2A578.0 0.24 0 0 1 1187.3 994.2"/><path d="M91.1 998.6A577.6 0.06 0 0 1 1186.9 998.6"/><path d="M91.5 1003.0A577.2 0.12 0 0 0 1186.5 1003.0"/><path d="M91.9 1007.4A576.8 0.30 0 0 0 1186.1 1007.4"/><path d="M92.3 1011.7A576.4 0.48 0 0 0 1185.7 1011.7"/><path d="M92.6 1016.1A576.0 0.66 0 0 0 1185.4 1016.1"/><path d="M93.0 1020.5A575.6 0.83 0 0 0 1185.0 1020.5"/><path d="M93.4 1024.9A575.1 1.01 0 0 0 1184.6 1024.9"/><path d="M93.8 1029.2A574.7 1.19 0 0 0 1184.2 1029.2"/><path d="M94.2 1033.6A574.3 1.36 0 0 0 1183.8 1033.6"/><path d="M94.6 1038.0A573.9 1.54 0 0 0 1183.4 1038.0"/><path d="M94.9 1042.4A573.5 1.72 0 0 0 1183.1 1042.4"/><path d="M95.3 1046.8A573.1 1.89 0 0 0 1182.7 1046.8"/><path d="M95.7 1051.2A572.7 2.07 0 0 0 1182.3 1051.2"/><path d="M96.1 1055.5A572.3 2.24 0 0 0 1181.9 1055.5"/><path d="M96.5 1059.9A571.9 2.42 0 0 0 1181.5 1059.9"/><path d="M96.9 1064.3A571.5 2.59 0 0 0 1181.1 1064.3"/><path d="M97.2 1068.7A571.1 2.77 0 0 0 1180.8 1068.7"/><path d="M98.3 1073.1A570.0 2.94 0 0 0 1179.7 1073.1"/><path d="M99.4 1077.4A568.8 3.11 0 0 0 1178.6 1077.4"/><path d="M100.6 1081.8A567.5 3.28 0 0 0 1177.4 1081.8"/><path d="M101.8 1086.2A566.3 3.45 0 0 0 1176.2 1086.2"/><path d="M103.0 1090.6A565.0 3.61 0 0 0 1175.0 1090.6"/><path d="M104.1 1095.0A563.8 3.78 0 0 0 1173.9 1095.0"/><path d="M105.3 1099.3A562.5 3.95 0 0 0 1172.7 1099.3"/><path d="M106.5 1103.7A561.3 4.11 0 0 0 1171.5 1103.7"/><path d="M107.7 1108.1A560.0 4.27 0 0 0 1170.3 1108.1"/><path d="M108.8 1112.5A558.8 4.44 0 0 0 1169.2 1112.5"/><path d="M110.0 1116.8A557.6 4.60 0 0 0 1168.0 1116.8"/><path d="M111.2 1121.2A556.3 4.76 0 0 0 1166.8 1121.2"/><path d="M112.3 1125.6A555.1 4.92 0 0 0 1165.7 1125.6"/><path d="M113.5 1130.0A553.8 5.08 0 0 0 1164.5 1130.0"/><path d="M114.7 1134.4A552.6 5.24 0 0 0 1163.3 1134.4"/><path d="M115.9 1138.8A551.3 5.40 0 0 0 1162.1 1138.8"/><path d="M117.0 1143.1A550.1 5.56 0 0 0 1161.0 1143.1"/><path d="M118.2 1147.5A548.9 5.72 0 0 0 1159.8 1147.5"/><path d="M119.4 1151.9A547.6 5.87 0 0 0 1158.6 1151.9"/><path d="M120.6 1156.3A546.4 6.03 0 0 0 1157.4 1156.3"/><path d="M121.7 1160.7A545.1 6.18 0 0 0 1156.3 1160.7"/><path d="M123.6 1165.0A543.1 6.33 0 0 0 1154.4 1165.0"/><path d="M125.6 1169.4A541.0 6.47 0 0 0 1152.4 1169.4"/><path d="M127.7 1173.8A538.8 6.61 0 0 0 1150.3 1173.8"/><path d="M129.7 1178.2A536.7 6.75 0 0 0 1148.3 1178.2"/><path d="M131.8 1182.6A534.5 6.89 0 0 0 1146.2 1182.6"/><path d="M133.8 1186.9A532.3 7.03 0 0 0 1144.2 1186.9"/><path d="M135.8 1191.3A530.2 7.16 0 0 0 1142.2 1191.3"/><path d="M137.9 1195.7A528.0 7.30 0 0 0 1140.1 1195.7"/><path d="M139.9 1200.1A525.8 7.43 0 0 0 1138.1 1200.1"/><path d="M142.0 1204.5A523.7 7.56 0 0 0 1136.0 1204.5"/><path d="M144.0 1208.8A521.5 7.69 0 0 0 1134.0 1208.8"/><path d="M146.1 1213.2A519.3 7.82 0 0 0 1131.9 1213.2"/><path d="M148.1 1217.6A517.2 7.95 0 0 0 1129.9 1217.6"/><path d="M150.1 1222.0A515.0 8.07 0 0 0 1127.9 1222.0"/><path d="M152.2 1226.3A512.8 8.20 0 0 0 1125.8 1226.3"/><path d="M154.2 1230.7A510.7 8.32 0 0 0 1123.8 1230.7"/><path d="M156.3 1235.1A508.5 8.44 0 0 0 1121.7 1235.1"/><path d="M158.3 1239.5A506.3 8.56 0 0 0 1119.7 1239.5"/><path d="M160.4 1243.9A504.2 8.68 0 0 0 1117.6 1243.9"/><path d="M162.5 1248.2A502.0 8.80 0 0 0 1115.5 1248.2"/><path d="M165.5 1252.6A498.7 8.90 0 0 0 1112.5 1252.6"/><path d="M168.6 1257.0A495.5 8.99 0 0 0 1109.4 1257.0"/><path d="M171.7 1261.4A492.2 9.08 0 0 0 1106.3 1261.4"/><path d="M174.7 1265.8A488.9 9.18 0 0 0 1103.3 1265.8"/><path d="M177.8 1270.2A485.7 9.27 0 0 0 1100.2 1270.2"/><path d="M180.9 1274.5A482.4 9.35 0 0 0 1097.1 1274.5"/><path d="M183.9 1278.9A479.2 9.44 0 0 0 1094.1 1278.9"/><path d="M187.0 1283.3A475.9 9.52 0 0 0 1091.0 1283.3"/><path d="M190.1 1287.7A472.7 9.60 0 0 0 1087.9 1287.7"/><path d="M193.1 1292.1A469.4 9.68 0 0 0 1084.9 1292.1"/><path d="M196.2 1296.4A466.2 9.76 0 0 0 1081.8 1296.4"/><path d="M199.3 1300.8A462.9 9.83 0 0 0 1078.7 1300.8"/><path d="M202.3 1305.2A459.7 9.91 0 0 0 1075.7 1305.2"/><path d="M205.4 1309.6A456.4 9.98 0 0 0 1072.6 1309.6"/><path d="M208.5 1314.0A453.2 10.05 0 0 0 1069.5 1314.0"/><path d="M211.5 1318.3A449.9 10.11 0 0 0 1066.5 1318.3"/><path d="M214.6 1322.7A446.7 10.18 0 0 0 1063.4 1322.7"/><path d="M218.0 1327.1A443.1 10.23 0 0 0 1060.0 1327.1"/><path d="M222.3 1331.5A438.5 10.26 0 0 0 1055.7 1331.5"/><path d="M226.7 1335.8A433.8 10.29 0 0 0 1051.3 1335.8"/><path d="M231.1 1340.2A429.2 10.31 0 0 0 1046.9 1340.2"/><path d="M235.5 1344.6A424.6 10.33 0 0 0 1042.5 1344.6"/><path d="M239.9 1349.0A419.9 10.35 0 0 0 1038.1 1349.0"/><path d="M244.2 1353.4A415.3 10.36 0 0 0 1033.8 1353.4"/><path d="M248.6 1357.8A410.6 10.37 0 0 0 1029.4 1357.8"/><path d="M253.0 1362.1A406.0 10.38 0 0 0 1025.0 1362.1"/><path d="M257.4 1366.5A401.3 10.39 0 0 0 1020.6 1366.5"/><path d="M261.8 1370.9A396.7 10.39 0 0 0 1016.2 1370.9"/><path d="M266.1 1375.3A392.1 10.39 0 0 0 1011.9 1375.3"/><path d="M270.5 1379.7A387.4 10.39 0 0 0 1007.5 1379.7"/><path d="M274.9 1384.0A382.8 10.38 0 0 0 1003.1 1384.0"/><path d="M279.3 1388.4A378.1 10.37 0 0 0 998.7 1388.4"/><path d="M283.7 1392.8A373.5 10.36 0 0 0 994.3 1392.8"/><path d="M289.6 1397.2A367.2 10.30 0 0 0 988.4 1397.2"/><path d="M295.9 1401.6A360.6 10.22 0 0 0 982.1 1401.6"/><path d="M302.1 1405.9A353.9 10.14 0 0 0 975.9 1405.9"/><path d="M308.4 1410.3A347.3 10.06 0 0 0 969.6 1410.3"/><path d="M314.6 1414.7A340.7 9.98 0 0 0 963.4 1414.7"/><path d="M320.9 1419.1A334.0 9.88 0 0 0 957.1 1419.1"/><path d="M327.1 1423.5A327.4 9.79 0 0 0 950.9 1423.5"/><path d="M333.4 1427.8A320.8 9.69 0 0 0 944.6 1427.8"/><path d="M339.6 1432.2A314.1 9.59 0 0 0 938.4 1432.2"/><path d="M345.9 1436.6A307.5 9.48 0 0 0 932.1 1436.6"/><path d="M352.2 1441.0A300.9 9.37 0 0 0 925.8 1441.0"/><path d="M358.4 1445.3A294.2 9.25 0 0 0 919.6 1445.3"/><path d="M365.7 1449.7A286.5 9.10 0 0 0 912.3 1449.7"/><path d="M375.1 1454.1A276.5 8.87 0 0 0 902.9 1454.1"/><path d="M384.5 1458.5A266.6 8.63 0 0 0 893.5 1458.5"/><path d="M393.9 1462.9A256.6 8.39 0 0 0 884.1 1462.9"/><path d="M403.3 1467.2A246.6 8.14 0 0 0 874.7 1467.2"/><path d="M412.7 1471.6A236.7 7.88 0 0 0 865.3 1471.6"/><path d="M422.1 1476.0A226.7 7.62 0 0 0 855.9 1476.0"/><path d="M431.5 1480.4A216.8 7.35 0 0 0 846.5 1480.4"/><path d="M440.9 1484.8A206.8 7.08 0 0 0 837.1 1484.8"/><path d="M451.3 1489.2A195.8 6.76 0 0 0 826.7 1489.2"/><path d="M467.6 1493.5A178.5 6.22 0 0 0 810.4 1493.5"/><path d="M484.0 1497.9A161.1 5.67 0 0 0 794.0 1497.9"/><path d="M500.3 1502.3A143.8 5.10 0 0 0 777.7 1502.3"/><path d="M516.7 1506.7A126.5 4.53 0 0 0 761.3 1506.7"/><path d="M533.0 1511.0A109.1 3.94 0 0 0 745.0 1511.0"/><path d="M566.6 1515.4A73.5 2.68 0 0 0 711.4 1515.4"/><path d="M573.0 1519.8A66.8 2.45 0 0 0 705.0 1519.8"/></g></defs>
<use href="#dk" fill="none" stroke="#000" stroke-opacity="0.14" stroke-width="2.6" transform="translate(0,1.0)"/>
<use href="#dk" fill="none" stroke="#000" stroke-opacity="0.40" stroke-width="1.5" transform="translate(0,1.5)"/>
<polygon points="639.0,427.5 544.0,435.8 451.9,460.5 365.5,500.8 287.4,555.5 220.0,622.9 165.3,701.0 125.0,787.4 100.3,879.5 92.0,974.5 100.3,1069.5 125.0,1161.6 165.3,1248.0 220.0,1326.1 287.4,1393.5 365.5,1448.2 451.9,1488.5 544.0,1513.2 639.0,1521.5 639.0,1521.5 545.4,1513.6 454.5,1489.3 369.0,1449.3 291.7,1394.7 224.8,1327.3 170.6,1249.0 130.5,1162.3 106.0,1069.8 97.8,974.4 106.0,879.0 130.5,786.5 170.6,699.8 224.8,621.5 291.7,554.1 369.0,499.6 454.5,459.6 545.4,435.3 639.0,427.5" fill="#000" fill-opacity="0.160"/><polygon points="639.0,427.5 545.4,435.3 454.5,459.6 369.0,499.6 291.7,554.1 224.8,621.5 170.6,699.8 130.5,786.5 106.0,879.0 97.8,974.4 106.0,1069.8 130.5,1162.3 170.6,1249.0 224.8,1327.3 291.7,1394.7 369.0,1449.3 454.5,1489.3 545.4,1513.6 639.0,1521.5 639.0,1521.5 549.6,1514.0 462.6,1490.1 380.8,1450.3 306.6,1395.9 242.4,1328.4 190.2,1250.0 151.7,1163.0 128.1,1070.1 120.2,974.3 128.1,878.4 151.7,785.5 190.2,698.6 242.4,620.2 306.6,552.8 380.8,498.4 462.6,458.8 549.6,434.9 639.0,427.5" fill="#000" fill-opacity="0.120"/><polygon points="639.0,427.5 549.6,434.9 462.6,458.8 380.8,498.4 306.6,552.8 242.4,620.2 190.2,698.6 151.7,785.5 128.1,878.4 120.2,974.3 128.1,1070.1 151.7,1163.0 190.2,1250.0 242.4,1328.4 306.6,1395.9 380.8,1450.3 462.6,1490.1 549.6,1514.0 639.0,1521.5 639.0,1521.5 556.5,1514.4 476.2,1490.8 400.5,1451.3 331.8,1397.0 272.3,1329.5 223.9,1250.9 188.1,1163.7 166.2,1070.4 158.8,974.2 166.2,877.9 188.1,784.7 223.9,697.5 272.3,618.9 331.8,551.6 400.5,497.4 476.2,458.0 556.5,434.5 639.0,427.5" fill="#000" fill-opacity="0.090"/><polygon points="639.0,427.5 556.5,434.5 476.2,458.0 400.5,497.4 331.8,551.6 272.3,618.9 223.9,697.5 188.1,784.7 166.2,877.9 158.8,974.2 166.2,1070.4 188.1,1163.7 223.9,1250.9 272.3,1329.5 331.8,1397.0 400.5,1451.3 476.2,1490.8 556.5,1514.4 639.0,1521.5 639.0,1521.5 566.0,1514.8 494.8,1491.4 427.6,1452.2 366.6,1398.0 313.7,1330.5 270.6,1251.8 238.7,1164.3 219.2,1070.7 212.6,974.1 219.2,877.4 238.7,783.9 270.6,696.4 313.7,617.8 366.6,550.5 427.6,496.4 494.8,457.2 566.0,434.1 639.0,427.5" fill="#000" fill-opacity="0.060"/><polygon points="639.0,427.5 566.0,434.1 494.8,457.2 427.6,496.4 366.6,550.5 313.7,617.8 270.6,696.4 238.7,783.9 219.2,877.4 212.6,974.1 219.2,1070.7 238.7,1164.3 270.6,1251.8 313.7,1330.5 366.6,1398.0 427.6,1452.2 494.8,1491.4 566.0,1514.8 639.0,1521.5 639.0,1521.5 577.7,1515.1 517.9,1492.0 461.4,1452.9 409.9,1398.8 365.3,1331.3 329.0,1252.5 302.1,1164.8 285.6,1070.9 280.0,974.0 285.6,877.0 302.1,783.2 329.0,695.6 365.3,616.8 409.9,549.5 461.4,495.6 517.9,456.6 577.7,433.8 639.0,427.5" fill="#000" fill-opacity="0.040"/><polygon points="639.0,427.5 577.7,433.8 517.9,456.6 461.4,495.6 409.9,549.5 365.3,616.8 329.0,695.6 302.1,783.2 285.6,877.0 280.0,974.0 285.6,1070.9 302.1,1164.8 329.0,1252.5 365.3,1331.3 409.9,1398.8 461.4,1452.9 517.9,1492.0 577.7,1515.1 639.0,1521.5 639.0,1521.5 591.3,1515.3 544.7,1492.5 500.6,1453.5 460.5,1399.5 425.7,1332.0 397.3,1253.1 376.3,1165.2 363.4,1071.1 359.0,973.9 363.4,876.7 376.3,782.7 397.3,694.9 425.7,616.1 460.5,548.7 500.6,494.9 544.7,456.1 591.3,433.5 639.0,427.5" fill="#000" fill-opacity="0.020"/><polygon points="639.0,427.5 655.6,433.2 671.8,455.5 687.1,494.1 701.1,547.8 713.3,615.1 723.2,694.0 730.5,782.0 735.0,876.3 736.5,973.8 735.0,1071.3 730.5,1165.7 723.2,1253.8 713.3,1332.8 701.1,1400.3 687.1,1454.3 671.8,1493.0 655.6,1515.6 639.0,1521.5 639.0,1521.5 671.6,1515.5 703.5,1492.8 733.7,1454.0 761.2,1400.0 785.1,1332.5 804.6,1253.5 819.0,1165.5 827.9,1071.2 830.9,973.8 827.9,876.5 819.0,782.3 804.6,694.3 785.1,615.5 761.2,548.1 733.7,494.4 703.5,455.7 671.6,433.3 639.0,427.5" fill="#000" fill-opacity="0.040"/><polygon points="639.0,427.5 671.6,433.3 703.5,455.7 733.7,494.4 761.2,548.1 785.1,615.5 804.6,694.3 819.0,782.3 827.9,876.5 830.9,973.8 827.9,1071.2 819.0,1165.5 804.6,1253.5 785.1,1332.5 761.2,1400.0 733.7,1454.0 703.5,1492.8 671.6,1515.5 639.0,1521.5 639.0,1521.5 686.7,1515.3 733.3,1492.5 777.4,1453.5 817.5,1399.5 852.3,1332.0 880.7,1253.1 901.7,1165.2 914.6,1071.1 919.0,973.9 914.6,876.7 901.7,782.7 880.7,694.9 852.3,616.1 817.5,548.7 777.4,494.9 733.3,456.1 686.7,433.5 639.0,427.5" fill="#000" fill-opacity="0.090"/><polygon points="639.0,427.5 686.7,433.5 733.3,456.1 777.4,494.9 817.5,548.7 852.3,616.1 880.7,694.9 901.7,782.7 914.6,876.7 919.0,973.9 914.6,1071.1 901.7,1165.2 880.7,1253.1 852.3,1332.0 817.5,1399.5 777.4,1453.5 733.3,1492.5 686.7,1515.3 639.0,1521.5 639.0,1521.5 700.3,1515.1 760.1,1492.0 816.6,1452.9 868.1,1398.8 912.7,1331.3 949.0,1252.5 975.9,1164.8 992.4,1070.9 998.0,974.0 992.4,877.0 975.9,783.2 949.0,695.6 912.7,616.8 868.1,549.5 816.6,495.6 760.1,456.6 700.3,433.8 639.0,427.5" fill="#000" fill-opacity="0.140"/><polygon points="639.0,427.5 700.3,433.8 760.1,456.6 816.6,495.6 868.1,549.5 912.7,616.8 949.0,695.6 975.9,783.2 992.4,877.0 998.0,974.0 992.4,1070.9 975.9,1164.8 949.0,1252.5 912.7,1331.3 868.1,1398.8 816.6,1452.9 760.1,1492.0 700.3,1515.1 639.0,1521.5 639.0,1521.5 712.0,1514.8 783.2,1491.4 850.4,1452.2 911.4,1398.0 964.3,1330.5 1007.4,1251.8 1039.3,1164.3 1058.8,1070.7 1065.4,974.1 1058.8,877.4 1039.3,783.9 1007.4,696.4 964.3,617.8 911.4,550.5 850.4,496.4 783.2,457.2 712.0,434.1 639.0,427.5" fill="#000" fill-opacity="0.190"/><polygon points="639.0,427.5 712.0,434.1 783.2,457.2 850.4,496.4 911.4,550.5 964.3,617.8 1007.4,696.4 1039.3,783.9 1058.8,877.4 1065.4,974.1 1058.8,1070.7 1039.3,1164.3 1007.4,1251.8 964.3,1330.5 911.4,1398.0 850.4,1452.2 783.2,1491.4 712.0,1514.8 639.0,1521.5 639.0,1521.5 721.5,1514.4 801.8,1490.8 877.5,1451.3 946.2,1397.0 1005.7,1329.5 1054.1,1250.9 1089.9,1163.7 1111.8,1070.4 1119.2,974.2 1111.8,877.9 1089.9,784.7 1054.1,697.5 1005.7,618.9 946.2,551.6 877.5,497.4 801.8,458.0 721.5,434.5 639.0,427.5" fill="#000" fill-opacity="0.230"/><polygon points="639.0,427.5 721.5,434.5 801.8,458.0 877.5,497.4 946.2,551.6 1005.7,618.9 1054.1,697.5 1089.9,784.7 1111.8,877.9 1119.2,974.2 1111.8,1070.4 1089.9,1163.7 1054.1,1250.9 1005.7,1329.5 946.2,1397.0 877.5,1451.3 801.8,1490.8 721.5,1514.4 639.0,1521.5 639.0,1521.5 728.4,1514.0 815.4,1490.1 897.2,1450.3 971.4,1395.9 1035.6,1328.4 1087.8,1250.0 1126.3,1163.0 1149.9,1070.1 1157.8,974.3 1149.9,878.4 1126.3,785.5 1087.8,698.6 1035.6,620.2 971.4,552.8 897.2,498.4 815.4,458.8 728.4,434.9 639.0,427.5" fill="#000" fill-opacity="0.270"/><polygon points="639.0,427.5 728.4,434.9 815.4,458.8 897.2,498.4 971.4,552.8 1035.6,620.2 1087.8,698.6 1126.3,785.5 1149.9,878.4 1157.8,974.3 1149.9,1070.1 1126.3,1163.0 1087.8,1250.0 1035.6,1328.4 971.4,1395.9 897.2,1450.3 815.4,1490.1 728.4,1514.0 639.0,1521.5 639.0,1521.5 732.6,1513.6 823.5,1489.3 909.0,1449.3 986.3,1394.7 1053.2,1327.3 1107.4,1249.0 1147.5,1162.3 1172.0,1069.8 1180.2,974.4 1172.0,879.0 1147.5,786.5 1107.4,699.8 1053.2,621.5 986.3,554.1 909.0,499.6 823.5,459.6 732.6,435.3 639.0,427.5" fill="#000" fill-opacity="0.300"/><polygon points="639.0,427.5 732.6,435.3 823.5,459.6 909.0,499.6 986.3,554.1 1053.2,621.5 1107.4,699.8 1147.5,786.5 1172.0,879.0 1180.2,974.4 1172.0,1069.8 1147.5,1162.3 1107.4,1249.0 1053.2,1327.3 986.3,1394.7 909.0,1449.3 823.5,1489.3 732.6,1513.6 639.0,1521.5 639.0,1521.5 734.0,1513.2 826.1,1488.5 912.5,1448.2 990.6,1393.5 1058.0,1326.1 1112.7,1248.0 1153.0,1161.6 1177.7,1069.5 1186.0,974.5 1177.7,879.5 1153.0,787.4 1112.7,701.0 1058.0,622.9 990.6,555.5 912.5,500.8 826.1,460.5 734.0,435.8 639.0,427.5" fill="#000" fill-opacity="0.330"/>
</g>
<g fill="#e9e9e9"><path d="M649.9 431.8 L657.1 435.1 L660.0 439.1 L662.9 443.0 L665.8 447.0 L668.7 451.0 L671.6 454.9 L673.5 459.1 L675.2 463.3 L676.8 467.4 L678.5 471.6 L680.2 475.8 L681.9 480.0 L683.6 484.2 L685.3 488.4 L686.9 492.6 L688.3 496.9 L689.4 501.2 L690.5 505.4 L691.6 509.7 L692.8 514.0 L693.9 518.3 L695.0 522.6 L696.2 526.9 L697.3 531.2 L698.4 535.6 L699.6 539.9 L700.7 544.2 L701.8 548.5 L702.6 552.9 L703.3 557.2 L704.1 561.6 L704.9 566.0 L705.7 570.3 L706.5 574.7 L707.3 579.1 L708.1 583.5 L708.9 587.8 L709.7 592.2 L710.5 596.6 L711.3 601.0 L712.1 605.4 L712.9 609.7 L713.7 614.1 L714.3 618.5 L714.9 623.0 L715.4 627.4 L716.0 631.8 L716.5 636.2 L717.1 640.6 L717.7 645.0 L718.2 649.5 L718.8 653.9 L719.3 658.3 L719.9 662.7 L720.5 667.2 L721.0 671.6 L721.6 676.0 L722.2 680.5 L722.7 684.9 L723.3 689.3 L723.8 693.8 L724.2 698.2 L724.6 702.7 L725.0 707.1 L725.3 711.6 L725.7 716.0 L726.1 720.5 L726.5 725.0 L726.8 729.4 L727.2 733.9 L727.6 738.3 L728.0 742.8 L728.3 747.3 L728.7 751.7 L729.1 756.2 L729.5 760.7 L729.8 765.1 L730.2 769.6 L730.6 774.1 L731.0 778.5 L731.3 783.0 L731.5 787.5 L731.7 791.9 L732.0 796.4 L732.2 800.9 L732.4 805.4 L732.6 809.9 L732.8 814.4 L733.0 818.8 L733.3 823.3 L733.5 827.8 L733.7 832.3 L733.9 836.8 L734.1 841.3 L734.3 845.7 L734.6 850.2 L734.8 854.7 L735.0 859.2 L735.2 863.7 L735.4 868.2 L735.6 872.7 L735.8 877.2 L735.9 881.6 L736.0 886.1 L736.0 890.6 L736.1 895.1 L736.2 899.6 L736.2 904.1 L736.3 908.6 L736.4 913.1 L736.5 917.6 L736.5 922.1 L736.6 926.6 L736.7 931.1 L736.7 935.6 L736.8 940.1 L736.9 944.6 L737.0 949.1 L737.0 953.6 L737.1 958.1 L737.2 962.6 L737.2 967.1 L737.3 971.6 L737.3 976.1 L737.2 980.6 L737.2 985.1 L737.1 989.6 L737.0 994.1 L737.0 998.6 L736.9 1003.0 L736.8 1007.5 L736.7 1012.0 L736.7 1016.5 L736.6 1021.0 L736.5 1025.5 L736.5 1030.0 L736.4 1034.5 L736.3 1039.0 L736.2 1043.5 L736.2 1048.0 L736.1 1052.5 L736.0 1057.0 L736.0 1061.5 L735.9 1066.0 L735.8 1070.5 L735.6 1075.0 L735.4 1079.5 L735.2 1084.0 L735.0 1088.5 L734.8 1092.9 L734.6 1097.4 L734.3 1101.9 L734.1 1106.4 L733.9 1110.9 L733.7 1115.4 L733.5 1119.9 L733.3 1124.4 L733.0 1128.8 L732.8 1133.3 L732.6 1137.8 L732.4 1142.3 L732.2 1146.8 L732.0 1151.3 L731.7 1155.8 L731.5 1160.2 L731.3 1164.7 L731.0 1169.2 L730.6 1173.7 L730.2 1178.1 L729.8 1182.6 L729.5 1187.1 L729.1 1191.6 L728.7 1196.0 L728.3 1200.5 L728.0 1205.0 L727.6 1209.4 L727.2 1213.9 L726.8 1218.4 L726.5 1222.8 L726.1 1227.3 L725.7 1231.7 L725.3 1236.2 L725.0 1240.7 L724.6 1245.1 L724.2 1249.6 L723.8 1254.0 L723.3 1258.5 L722.7 1262.9 L722.2 1267.4 L721.6 1271.8 L721.0 1276.2 L720.5 1280.7 L719.9 1285.1 L719.3 1289.6 L718.8 1294.0 L718.2 1298.4 L717.7 1302.8 L717.1 1307.3 L716.5 1311.7 L716.0 1316.1 L715.4 1320.6 L714.9 1325.0 L714.3 1329.4 L713.7 1333.8 L712.9 1338.2 L712.1 1342.6 L711.3 1347.0 L710.5 1351.4 L709.7 1355.8 L708.9 1360.2 L708.1 1364.6 L707.3 1369.0 L706.5 1373.3 L705.7 1377.7 L704.9 1382.1 L704.1 1386.5 L703.3 1390.9 L702.5 1395.2 L701.1 1399.6 L699.4 1403.9 L697.6 1408.3 L695.8 1412.6 L694.1 1416.9 L692.3 1421.3 L690.5 1425.6 L688.8 1429.9 L687.0 1434.2 L685.2 1438.5 L683.5 1442.8 L681.7 1447.1 L680.0 1451.4" fill="none" stroke="#cdcdcd" stroke-width="5"/><ellipse cx="649.9" cy="431.8" rx="3.3" ry="1.7"/><ellipse cx="657.1" cy="435.1" rx="3.5" ry="1.7"/><ellipse cx="660.0" cy="439.1" rx="3.6" ry="1.7"/><ellipse cx="662.9" cy="443.0" rx="3.7" ry="1.7"/><ellipse cx="665.8" cy="447.0" rx="3.8" ry="1.7"/><ellipse cx="668.7" cy="451.0" rx="3.8" ry="1.7"/><ellipse cx="671.6" cy="454.9" rx="3.9" ry="1.7"/><ellipse cx="673.5" cy="459.1" rx="4.0" ry="1.7"/><ellipse cx="675.2" cy="463.3" rx="4.0" ry="1.7"/><ellipse cx="676.8" cy="467.4" rx="4.1" ry="1.7"/><ellipse cx="678.5" cy="471.6" rx="4.1" ry="1.7"/><ellipse cx="680.2" cy="475.8" rx="4.1" ry="1.7"/><ellipse cx="681.9" cy="480.0" rx="4.2" ry="1.7"/><ellipse cx="683.6" cy="484.2" rx="4.2" ry="1.7"/><ellipse cx="685.3" cy="488.4" rx="4.3" ry="1.7"/><ellipse cx="686.9" cy="492.6" rx="4.3" ry="1.7"/><ellipse cx="688.3" cy="496.9" rx="4.4" ry="1.7"/><ellipse cx="689.4" cy="501.2" rx="4.4" ry="1.7"/><ellipse cx="690.5" cy="505.4" rx="4.4" ry="1.7"/><ellipse cx="691.6" cy="509.7" rx="4.5" ry="1.7"/><ellipse cx="692.8" cy="514.0" rx="4.5" ry="1.7"/><ellipse cx="693.9" cy="518.3" rx="4.5" ry="1.7"/><ellipse cx="695.0" cy="522.6" rx="4.6" ry="1.7"/><ellipse cx="696.2" cy="526.9" rx="4.6" ry="1.7"/><ellipse cx="697.3" cy="531.2" rx="4.6" ry="1.7"/><ellipse cx="698.4" cy="535.6" rx="4.6" ry="1.7"/><ellipse cx="699.6" cy="539.9" rx="4.7" ry="1.7"/><ellipse cx="700.7" cy="544.2" rx="4.7" ry="1.7"/><ellipse cx="701.8" cy="548.5" rx="4.7" ry="1.7"/><ellipse cx="702.6" cy="552.9" rx="4.8" ry="1.7"/><ellipse cx="703.3" cy="557.2" rx="4.8" ry="1.7"/><ellipse cx="704.1" cy="561.6" rx="4.8" ry="1.7"/><ellipse cx="704.9" cy="566.0" rx="4.8" ry="1.7"/><ellipse cx="705.7" cy="570.3" rx="4.8" ry="1.7"/><ellipse cx="706.5" cy="574.7" rx="4.8" ry="1.7"/><ellipse cx="707.3" cy="579.1" rx="4.8" ry="1.7"/><ellipse cx="708.1" cy="583.5" rx="4.8" ry="1.7"/><ellipse cx="708.9" cy="587.8" rx="4.8" ry="1.7"/><ellipse cx="709.7" cy="592.2" rx="4.8" ry="1.7"/><ellipse cx="710.5" cy="596.6" rx="4.8" ry="1.7"/><ellipse cx="711.3" cy="601.0" rx="4.8" ry="1.7"/><ellipse cx="712.1" cy="605.4" rx="4.8" ry="1.7"/><ellipse cx="712.9" cy="609.7" rx="4.8" ry="1.7"/><ellipse cx="713.7" cy="614.1" rx="4.8" ry="1.7"/><ellipse cx="714.3" cy="618.5" rx="4.8" ry="1.7"/><ellipse cx="714.9" cy="623.0" rx="4.8" ry="1.7"/><ellipse cx="715.4" cy="627.4" rx="4.8" ry="1.7"/><ellipse cx="716.0" cy="631.8" rx="4.8" ry="1.7"/><ellipse cx="716.5" cy="636.2" rx="4.8" ry="1.7"/><ellipse cx="717.1" cy="640.6" rx="4.8" ry="1.7"/><ellipse cx="717.7" cy="645.0" rx="4.8" ry="1.7"/><ellipse cx="718.2" cy="649.5" rx="4.8" ry="1.7"/><ellipse cx="718.8" cy="653.9" rx="4.8" ry="1.7"/><ellipse cx="719.3" cy="658.3" rx="4.8" ry="1.7"/><ellipse cx="719.9" cy="662.7" rx="4.8" ry="1.7"/><ellipse cx="720.5" cy="667.2" rx="4.8" ry="1.7"/><ellipse cx="721.0" cy="671.6" rx="4.8" ry="1.7"/><ellipse cx="721.6" cy="676.0" rx="4.8" ry="1.7"/><ellipse cx="722.2" cy="680.5" rx="4.8" ry="1.7"/><ellipse cx="722.7" cy="684.9" rx="4.8" ry="1.7"/><ellipse cx="723.3" cy="689.3" rx="4.8" ry="1.7"/><ellipse cx="723.8" cy="693.8" rx="4.8" ry="1.7"/><ellipse cx="724.2" cy="698.2" rx="4.8" ry="1.7"/><ellipse cx="724.6" cy="702.7" rx="4.8" ry="1.7"/><ellipse cx="725.0" cy="707.1" rx="4.8" ry="1.7"/><ellipse cx="725.3" cy="711.6" rx="4.8" ry="1.7"/><ellipse cx="725.7" cy="716.0" rx="4.8" ry="1.7"/><ellipse cx="726.1" cy="720.5" rx="4.8" ry="1.7"/><ellipse cx="726.5" cy="725.0" rx="4.8" ry="1.7"/><ellipse cx="726.8" cy="729.4" rx="4.8" ry="1.7"/><ellipse cx="727.2" cy="733.9" rx="4.8" ry="1.7"/><ellipse cx="727.6" cy="738.3" rx="4.8" ry="1.7"/><ellipse cx="728.0" cy="742.8" rx="4.8" ry="1.7"/><ellipse cx="728.3" cy="747.3" rx="4.8" ry="1.7"/><ellipse cx="728.7" cy="751.7" rx="4.8" ry="1.7"/><ellipse cx="729.1" cy="756.2" rx="4.8" ry="1.7"/><ellipse cx="729.5" cy="760.7" rx="4.8" ry="1.7"/><ellipse cx="729.8" cy="765.1" rx="4.8" ry="1.7"/><ellipse cx="730.2" cy="769.6" rx="4.8" ry="1.7"/><ellipse cx="730.6" cy="774.1" rx="4.8" ry="1.7"/><ellipse cx="731.0" cy="778.5" rx="4.8" ry="1.7"/><ellipse cx="731.3" cy="783.0" rx="4.8" ry="1.7"/><ellipse cx="731.5" cy="787.5" rx="4.8" ry="1.7"/><ellipse cx="731.7" cy="791.9" rx="4.8" ry="1.7"/><ellipse cx="732.0" cy="796.4" rx="4.8" ry="1.7"/><ellipse cx="732.2" cy="800.9" rx="4.8" ry="1.7"/><ellipse cx="732.4" cy="805.4" rx="4.8" ry="1.7"/><ellipse cx="732.6" cy="809.9" rx="4.8" ry="1.7"/><ellipse cx="732.8" cy="814.4" rx="4.8" ry="1.7"/><ellipse cx="733.0" cy="818.8" rx="4.8" ry="1.7"/><ellipse cx="733.3" cy="823.3" rx="4.8" ry="1.7"/><ellipse cx="733.5" cy="827.8" rx="4.8" ry="1.7"/><ellipse cx="733.7" cy="832.3" rx="4.8" ry="1.7"/><ellipse cx="733.9" cy="836.8" rx="4.8" ry="1.7"/><ellipse cx="734.1" cy="841.3" rx="4.8" ry="1.7"/><ellipse cx="734.3" cy="845.7" rx="4.8" ry="1.7"/><ellipse cx="734.6" cy="850.2" rx="4.8" ry="1.7"/><ellipse cx="734.8" cy="854.7" rx="4.8" ry="1.7"/><ellipse cx="735.0" cy="859.2" rx="4.8" ry="1.7"/><ellipse cx="735.2" cy="863.7" rx="4.8" ry="1.7"/><ellipse cx="735.4" cy="868.2" rx="4.8" ry="1.7"/><ellipse cx="735.6" cy="872.7" rx="4.8" ry="1.7"/><ellipse cx="735.8" cy="877.2" rx="4.8" ry="1.7"/><ellipse cx="735.9" cy="881.6" rx="4.8" ry="1.7"/><ellipse cx="736.0" cy="886.1" rx="4.8" ry="1.7"/><ellipse cx="736.0" cy="890.6" rx="4.8" ry="1.7"/><ellipse cx="736.1" cy="895.1" rx="4.8" ry="1.7"/><ellipse cx="736.2" cy="899.6" rx="4.8" ry="1.7"/><ellipse cx="736.2" cy="904.1" rx="4.8" ry="1.7"/><ellipse cx="736.3" cy="908.6" rx="4.8" ry="1.7"/><ellipse cx="736.4" cy="913.1" rx="4.8" ry="1.7"/><ellipse cx="736.5" cy="917.6" rx="4.8" ry="1.7"/><ellipse cx="736.5" cy="922.1" rx="4.8" ry="1.7"/><ellipse cx="736.6" cy="926.6" rx="4.8" ry="1.7"/><ellipse cx="736.7" cy="931.1" rx="4.8" ry="1.7"/><ellipse cx="736.7" cy="935.6" rx="4.8" ry="1.7"/><ellipse cx="736.8" cy="940.1" rx="4.8" ry="1.7"/><ellipse cx="736.9" cy="944.6" rx="4.8" ry="1.7"/><ellipse cx="737.0" cy="949.1" rx="4.8" ry="1.7"/><ellipse cx="737.0" cy="953.6" rx="4.8" ry="1.7"/><ellipse cx="737.1" cy="958.1" rx="4.8" ry="1.7"/><ellipse cx="737.2" cy="962.6" rx="4.8" ry="1.7"/><ellipse cx="737.2" cy="967.1" rx="4.8" ry="1.7"/><ellipse cx="737.3" cy="971.6" rx="4.8" ry="1.7"/><ellipse cx="737.3" cy="976.1" rx="4.8" ry="1.7"/><ellipse cx="737.2" cy="980.6" rx="4.8" ry="1.7"/><ellipse cx="737.2" cy="985.1" rx="4.8" ry="1.7"/><ellipse cx="737.1" cy="989.6" rx="4.8" ry="1.7"/><ellipse cx="737.0" cy="994.1" rx="4.8" ry="1.7"/><ellipse cx="737.0" cy="998.6" rx="4.8" ry="1.7"/><ellipse cx="736.9" cy="1003.0" rx="4.8" ry="1.7"/><ellipse cx="736.8" cy="1007.5" rx="4.8" ry="1.7"/><ellipse cx="736.7" cy="1012.0" rx="4.8" ry="1.7"/><ellipse cx="736.7" cy="1016.5" rx="4.8" ry="1.7"/><ellipse cx="736.6" cy="1021.0" rx="4.8" ry="1.7"/><ellipse cx="736.5" cy="1025.5" rx="4.8" ry="1.7"/><ellipse cx="736.5" cy="1030.0" rx="4.8" ry="1.7"/><ellipse cx="736.4" cy="1034.5" rx="4.8" ry="1.7"/><ellipse cx="736.3" cy="1039.0" rx="4.8" ry="1.7"/><ellipse cx="736.2" cy="1043.5" rx="4.8" ry="1.7"/><ellipse cx="736.2" cy="1048.0" rx="4.8" ry="1.7"/><ellipse cx="736.1" cy="1052.5" rx="4.8" ry="1.7"/><ellipse cx="736.0" cy="1057.0" rx="4.8" ry="1.7"/><ellipse cx="736.0" cy="1061.5" rx="4.8" ry="1.7"/><ellipse cx="735.9" cy="1066.0" rx="4.8" ry="1.7"/><ellipse cx="735.8" cy="1070.5" rx="4.8" ry="1.7"/><ellipse cx="735.6" cy="1075.0" rx="4.8" ry="1.7"/><ellipse cx="735.4" cy="1079.5" rx="4.8" ry="1.7"/><ellipse cx="735.2" cy="1084.0" rx="4.8" ry="1.7"/><ellipse cx="735.0" cy="1088.5" rx="4.8" ry="1.7"/><ellipse cx="734.8" cy="1092.9" rx="4.8" ry="1.7"/><ellipse cx="734.6" cy="1097.4" rx="4.8" ry="1.7"/><ellipse cx="734.3" cy="1101.9" rx="4.8" ry="1.7"/><ellipse cx="734.1" cy="1106.4" rx="4.8" ry="1.7"/><ellipse cx="733.9" cy="1110.9" rx="4.8" ry="1.7"/><ellipse cx="733.7" cy="1115.4" rx="4.8" ry="1.7"/><ellipse cx="733.5" cy="1119.9" rx="4.8" ry="1.7"/><ellipse cx="733.3" cy="1124.4" rx="4.8" ry="1.7"/><ellipse cx="733.0" cy="1128.8" rx="4.8" ry="1.7"/><ellipse cx="732.8" cy="1133.3" rx="4.8" ry="1.7"/><ellipse cx="732.6" cy="1137.8" rx="4.8" ry="1.7"/><ellipse cx="732.4" cy="1142.3" rx="4.8" ry="1.7"/><ellipse cx="732.2" cy="1146.8" rx="4.8" ry="1.7"/><ellipse cx="732.0" cy="1151.3" rx="4.8" ry="1.7"/><ellipse cx="731.7" cy="1155.8" rx="4.8" ry="1.7"/><ellipse cx="731.5" cy="1160.2" rx="4.8" ry="1.7"/><ellipse cx="731.3" cy="1164.7" rx="4.8" ry="1.7"/><ellipse cx="731.0" cy="1169.2" rx="4.8" ry="1.7"/><ellipse cx="730.6" cy="1173.7" rx="4.8" ry="1.7"/><ellipse cx="730.2" cy="1178.1" rx="4.8" ry="1.7"/><ellipse cx="729.8" cy="1182.6" rx="4.8" ry="1.7"/><ellipse cx="729.5" cy="1187.1" rx="4.8" ry="1.7"/><ellipse cx="729.1" cy="1191.6" rx="4.8" ry="1.7"/><ellipse cx="728.7" cy="1196.0" rx="4.8" ry="1.7"/><ellipse cx="728.3" cy="1200.5" rx="4.8" ry="1.7"/><ellipse cx="728.0" cy="1205.0" rx="4.8" ry="1.7"/><ellipse cx="727.6" cy="1209.4" rx="4.8" ry="1.7"/><ellipse cx="727.2" cy="1213.9" rx="4.8" ry="1.7"/><ellipse cx="726.8" cy="1218.4" rx="4.8" ry="1.7"/><ellipse cx="726.5" cy="1222.8" rx="4.8" ry="1.7"/><ellipse cx="726.1" cy="1227.3" rx="4.8" ry="1.7"/><ellipse cx="725.7" cy="1231.7" rx="4.8" ry="1.7"/><ellipse cx="725.3" cy="1236.2" rx="4.8" ry="1.7"/><ellipse cx="725.0" cy="1240.7" rx="4.8" ry="1.7"/><ellipse cx="724.6" cy="1245.1" rx="4.8" ry="1.7"/><ellipse cx="724.2" cy="1249.6" rx="4.8" ry="1.7"/><ellipse cx="723.8" cy="1254.0" rx="4.8" ry="1.7"/><ellipse cx="723.3" cy="1258.5" rx="4.8" ry="1.7"/><ellipse cx="722.7" cy="1262.9" rx="4.8" ry="1.7"/><ellipse cx="722.2" cy="1267.4" rx="4.8" ry="1.7"/><ellipse cx="721.6" cy="1271.8" rx="4.8" ry="1.7"/><ellipse cx="721.0" cy="1276.2" rx="4.8" ry="1.7"/><ellipse cx="720.5" cy="1280.7" rx="4.8" ry="1.7"/><ellipse cx="719.9" cy="1285.1" rx="4.8" ry="1.7"/><ellipse cx="719.3" cy="1289.6" rx="4.8" ry="1.7"/><ellipse cx="718.8" cy="1294.0" rx="4.8" ry="1.7"/><ellipse cx="718.2" cy="1298.4" rx="4.8" ry="1.7"/><ellipse cx="717.7" cy="1302.8" rx="4.8" ry="1.7"/><ellipse cx="717.1" cy="1307.3" rx="4.8" ry="1.7"/><ellipse cx="716.5" cy="1311.7" rx="4.8" ry="1.7"/><ellipse cx="716.0" cy="1316.1" rx="4.8" ry="1.7"/><ellipse cx="715.4" cy="1320.6" rx="4.8" ry="1.7"/><ellipse cx="714.9" cy="1325.0" rx="4.8" ry="1.7"/><ellipse cx="714.3" cy="1329.4" rx="4.8" ry="1.7"/><ellipse cx="713.7" cy="1333.8" rx="4.8" ry="1.7"/><ellipse cx="712.9" cy="1338.2" rx="4.8" ry="1.7"/><ellipse cx="712.1" cy="1342.6" rx="4.8" ry="1.7"/><ellipse cx="711.3" cy="1347.0" rx="4.8" ry="1.7"/><ellipse cx="710.5" cy="1351.4" rx="4.8" ry="1.7"/><ellipse cx="709.7" cy="1355.8" rx="4.8" ry="1.7"/><ellipse cx="708.9" cy="1360.2" rx="4.8" ry="1.7"/><ellipse cx="708.1" cy="1364.6" rx="4.8" ry="1.7"/><ellipse cx="707.3" cy="1369.0" rx="4.8" ry="1.7"/><ellipse cx="706.5" cy="1373.3" rx="4.8" ry="1.7"/><ellipse cx="705.7" cy="1377.7" rx="4.8" ry="1.7"/><ellipse cx="704.9" cy="1382.1" rx="4.8" ry="1.7"/><ellipse cx="704.1" cy="1386.5" rx="4.8" ry="1.7"/><ellipse cx="703.3" cy="1390.9" rx="4.8" ry="1.7"/><ellipse cx="702.5" cy="1395.2" rx="4.8" ry="1.7"/><ellipse cx="701.1" cy="1399.6" rx="4.7" ry="1.7"/><ellipse cx="699.4" cy="1403.9" rx="4.7" ry="1.7"/><ellipse cx="697.6" cy="1408.3" rx="4.7" ry="1.7"/><ellipse cx="695.8" cy="1412.6" rx="4.6" ry="1.7"/><ellipse cx="694.1" cy="1416.9" rx="4.6" ry="1.7"/><ellipse cx="692.3" cy="1421.3" rx="4.6" ry="1.7"/><ellipse cx="690.5" cy="1425.6" rx="4.6" ry="1.7"/><ellipse cx="688.8" cy="1429.9" rx="4.5" ry="1.7"/><ellipse cx="687.0" cy="1434.2" rx="4.5" ry="1.7"/><ellipse cx="685.2" cy="1438.5" rx="4.5" ry="1.7"/><ellipse cx="683.5" cy="1442.8" rx="4.4" ry="1.7"/><ellipse cx="681.7" cy="1447.1" rx="4.4" ry="1.7"/><ellipse cx="680.0" cy="1451.4" rx="4.4" ry="1.7"/></g>
<path d="M679 1453 L640 1521" fill="none" stroke="#7a0a70" stroke-width="1" stroke-dasharray="2 2"/>
</svg>
<div id="topbar"></div>
<div id="panel">
<div id="hdr"></div>
<div class="b" style="left:24px;top:17.2px;font-size:25.8px;line-height:30px;letter-spacing:-.53px">Slicing Result</div>
<svg style="position:absolute;left:872px;top:12px" width="32" height="26" viewBox="0 0 32 26"><path d="M4.5 14 L16 6 L27.5 14 M4.5 21 L16 13 L27.5 21" fill="none" stroke="#fff" stroke-width="2" stroke-linecap="round" stroke-linejoin="round"/></svg>
<div class="b" style="left:24.5px;top:64.3px;font-size:25.8px;line-height:30px;letter-spacing:-.62px">Color Scheme</div>
<div id="dd"><svg style="position:absolute;left:10px;top:16px" width="26" height="12" viewBox="0 0 26 12"><path d="M2 3 L11.5 8.3 L22 3" fill="none" stroke="#fff" stroke-width="1.1" stroke-linecap="round"/></svg>
<div class="t" style="left:49.6px;top:5.8px;font-size:26px;line-height:30px;letter-spacing:-.4px">Speed</div></div>
<div class="b" style="left:24px;top:114px;font-size:25.8px;line-height:30px;letter-spacing:.05px">Speed (mm/s)</div>
<div class="sep" style="top:152px"></div>
<div id="legend"><div class="row" style="top:102px"><i style="background:#00ff00"></i><span>194</span></div><div class="row" style="top:144px"><i style="background:#6eff00"></i><span>173</span></div><div class="row" style="top:186px"><i style="background:#aaff00"></i><span>153</span></div><div class="row" style="top:228px"><i style="background:#d9ff00"></i><span>132</span></div><div class="row" style="top:270px"><i style="background:#ffff00"></i><span>112</span></div><div class="row" style="top:312px"><i style="background:#ffd622"></i><span>92</span></div><div class="row" style="top:354px"><i style="background:#ffb044"></i><span>71</span></div><div class="row" style="top:396px"><i style="background:#ff8877"></i><span>51</span></div><div class="row" style="top:438px"><i style="background:#ff55aa"></i><span>30</span></div><div class="row" style="top:480px"><i style="background:#ff00ff"></i><span>10</span></div></div>
<div class="b" style="left:24px;top:587.8px;font-size:25.8px;line-height:30px;letter-spacing:.15px">Options</div>
<div class="b" style="left:454.5px;top:587.8px;font-size:25.8px;line-height:30px;letter-spacing:-.2px">Display</div>
<div class="sep" style="top:626px"></div>
<div class="t" style="left:24px;top:635px;font-size:25px;line-height:29px;letter-spacing:.8px">travel</div>
<div id="cb"></div>
</div>
</body></html>
